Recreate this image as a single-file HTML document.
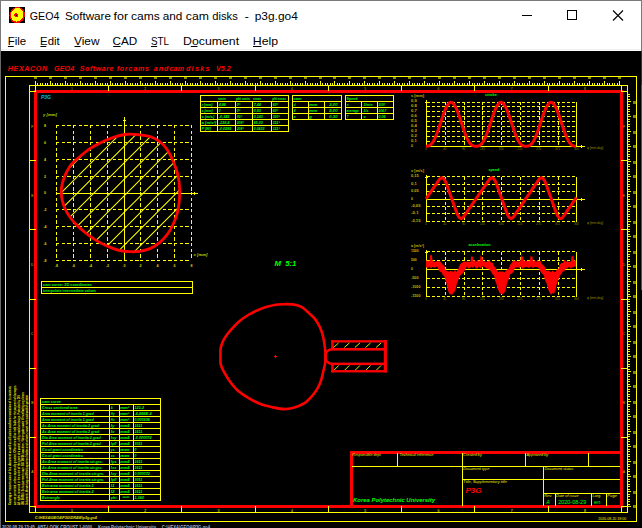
<!DOCTYPE html>
<html><head><meta charset="utf-8"><style>
html,body{margin:0;padding:0;width:642px;height:528px;overflow:hidden;background:#fff;}
body{position:relative;font-family:"Liberation Sans",sans-serif;}
.t{position:absolute;white-space:nowrap;color:#000;font-size:12px;line-height:14px;}
.u{text-decoration:underline;text-underline-offset:1px;}
svg text{font-family:"Liberation Sans",sans-serif;}
</style></head><body>
<div style="position:absolute;left:0;top:0;width:640px;height:527px;border:1px solid #7a7a7a;border-bottom:none"></div>
<svg style="position:absolute;left:9px;top:7px" width="16" height="16" shape-rendering="crispEdges"><rect width="16" height="16" fill="#000"/><ellipse cx="8.2" cy="8.2" rx="7.6" ry="8.2" transform="rotate(25 8.2 8.2)" fill="#f00"/><ellipse cx="8" cy="7.8" rx="6.2" ry="6.9" transform="rotate(25 8 7.8)" fill="#ff0"/><circle cx="7.3" cy="8.3" r="2.1" fill="#f00"/><rect x="7" y="8" width="1.2" height="1.2" fill="#000"/></svg>
<svg style="position:absolute;left:0;top:0" width="642" height="51"><text x="29.799999999999997" y="19.7" font-size="11.8" fill="#000" textLength="29.6" lengthAdjust="spacingAndGlyphs">GEO4</text><text x="64.9" y="19.7" font-size="11.8" fill="#000" textLength="46.1" lengthAdjust="spacingAndGlyphs">Software</text><text x="113.60000000000001" y="19.7" font-size="11.8" fill="#000" textLength="14.6" lengthAdjust="spacingAndGlyphs">for</text><text x="131.1" y="19.7" font-size="11.8" fill="#000" textLength="28.8" lengthAdjust="spacingAndGlyphs">cams</text><text x="162.8" y="19.7" font-size="11.8" fill="#000" textLength="19.6" lengthAdjust="spacingAndGlyphs">and</text><text x="185.8" y="19.7" font-size="11.8" fill="#000" textLength="23.1" lengthAdjust="spacingAndGlyphs">cam</text><text x="212.3" y="19.7" font-size="11.8" fill="#000" textLength="25.5" lengthAdjust="spacingAndGlyphs">disks</text><text x="244.6" y="19.7" font-size="11.8" fill="#000" textLength="4.4" lengthAdjust="spacingAndGlyphs">-</text><text x="254.70000000000002" y="19.7" font-size="11.8" fill="#000" textLength="43.1" lengthAdjust="spacingAndGlyphs">p3g.go4</text><text x="7.699999999999999" y="44.6" font-size="11.8" fill="#000" textLength="18.5" lengthAdjust="spacingAndGlyphs">File</text><text x="40.1" y="44.6" font-size="11.8" fill="#000" textLength="19.5" lengthAdjust="spacingAndGlyphs">Edit</text><text x="74.0" y="44.6" font-size="11.8" fill="#000" textLength="25.5" lengthAdjust="spacingAndGlyphs">View</text><text x="112.6" y="44.6" font-size="11.8" fill="#000" textLength="24.7" lengthAdjust="spacingAndGlyphs">CAD</text><text x="150.9" y="44.6" font-size="11.8" fill="#000" textLength="18.1" lengthAdjust="spacingAndGlyphs">STL</text><text x="183.0" y="44.6" font-size="11.8" fill="#000" textLength="56.1" lengthAdjust="spacingAndGlyphs">Document</text><text x="252.8" y="44.6" font-size="11.8" fill="#000" textLength="25.3" lengthAdjust="spacingAndGlyphs">Help</text><rect x="7.9" y="46" width="5.8" height="1" fill="#000"/><rect x="40.4" y="46" width="5.9" height="1" fill="#000"/><rect x="74.5" y="46" width="6.0" height="1" fill="#000"/><rect x="113.2" y="46" width="7.4" height="1" fill="#000"/><rect x="151" y="46" width="6.1" height="1" fill="#000"/><rect x="190.8" y="46" width="6.7" height="1" fill="#000"/><rect x="253" y="46" width="8.5" height="1" fill="#000"/></svg>
<svg style="position:absolute;left:0;top:0" width="642" height="30">
<line x1="522" y1="15.5" x2="532" y2="15.5" stroke="#000" stroke-width="1"/>
<rect x="567.5" y="10.5" width="9" height="9" fill="none" stroke="#000" stroke-width="1"/>
<path d="M613,10.5 L623,20.5 M623,10.5 L613,20.5" stroke="#000" stroke-width="1.1"/>
</svg>
<svg style="position:absolute;left:0;top:0" width="642" height="528" shape-rendering="crispEdges">
<rect x="1" y="51" width="641" height="477" fill="#000"/><rect x="641" y="51" width="1" height="34" fill="#303438"/><rect x="641" y="85" width="1" height="205" fill="#555"/><rect x="0" y="51" width="1" height="477" fill="#6a6a6a"/><rect x="1" y="49" width="640" height="1" fill="#f0f0f0"/><text x="7.8" y="71" font-size="7" fill="#ff0000" font-style="italic" font-weight="bold" textLength="39.2" lengthAdjust="spacing">HEXACON</text><text x="54" y="71" font-size="7" fill="#ff0000" font-style="italic" font-weight="bold" textLength="20.2" lengthAdjust="spacing">GEO4</text><text x="79.8" y="71" font-size="7" fill="#ff0000" font-style="italic" font-weight="bold" textLength="33.6" lengthAdjust="spacing">Software</text><text x="116.8" y="71" font-size="7" fill="#ff0000" font-style="italic" font-weight="bold" textLength="10.7" lengthAdjust="spacing">for</text><text x="128.5" y="71" font-size="7" fill="#ff0000" font-style="italic" font-weight="bold" textLength="20.5" lengthAdjust="spacing">cams</text><text x="153.8" y="71" font-size="7" fill="#ff0000" font-style="italic" font-weight="bold" textLength="14.6" lengthAdjust="spacing">and</text><text x="169.4" y="71" font-size="7" fill="#ff0000" font-style="italic" font-weight="bold" textLength="14.6" lengthAdjust="spacing">cam</text><text x="186" y="71" font-size="7" fill="#ff0000" font-style="italic" font-weight="bold" textLength="23.3" lengthAdjust="spacing">disks</text><text x="216" y="71" font-size="7" fill="#ff0000" font-style="italic" font-weight="bold" textLength="14.7" lengthAdjust="spacing">V5.2</text><rect x="5.5" y="76.5" width="631" height="445" stroke="#ffff00" stroke-width="1" fill="none" /><line x1="29" y1="85.5" x2="627.5" y2="85.5" stroke="#ffff00" stroke-width="1" /><line x1="29" y1="512.5" x2="627.5" y2="512.5" stroke="#ffff00" stroke-width="1" /><line x1="29.5" y1="85" x2="29.5" y2="513" stroke="#ffff00" stroke-width="1" /><line x1="627.5" y1="85" x2="627.5" y2="513" stroke="#ffff00" stroke-width="1" /><rect x="35.5" y="91.5" width="586" height="415" stroke="#ff0000" stroke-width="3" fill="none" /><rect x="29.5" y="85.5" width="6" height="6" stroke="#ffff00" stroke-width="1" fill="none" /><rect x="621.5" y="85.5" width="6" height="6" stroke="#ffff00" stroke-width="1" fill="none" /><rect x="29.5" y="506.5" width="6" height="6" stroke="#ffff00" stroke-width="1" fill="none" /><rect x="621.5" y="506.5" width="6" height="6" stroke="#ffff00" stroke-width="1" fill="none" /><line x1="35.5" y1="81" x2="35.5" y2="85.5" stroke="#ffff00" stroke-width="1" /><rect x="34" y="77" width="3" height="2" fill="#8a8a00"/><line x1="37.5" y1="82.5" x2="37.5" y2="85.5" stroke="#ffff00" stroke-width="1" /><line x1="40.5" y1="82.5" x2="40.5" y2="85.5" stroke="#ffff00" stroke-width="1" /><line x1="42.5" y1="82.5" x2="42.5" y2="85.5" stroke="#ffff00" stroke-width="1" /><line x1="45.5" y1="82.5" x2="45.5" y2="85.5" stroke="#ffff00" stroke-width="1" /><line x1="47.5" y1="82.5" x2="47.5" y2="85.5" stroke="#ffff00" stroke-width="1" /><line x1="50.5" y1="81" x2="50.5" y2="85.5" stroke="#ffff00" stroke-width="1" /><rect x="49" y="77" width="3" height="2" fill="#8a8a00"/><line x1="52.5" y1="82.5" x2="52.5" y2="85.5" stroke="#ffff00" stroke-width="1" /><line x1="55.5" y1="82.5" x2="55.5" y2="85.5" stroke="#ffff00" stroke-width="1" /><line x1="57.5" y1="82.5" x2="57.5" y2="85.5" stroke="#ffff00" stroke-width="1" /><line x1="60.5" y1="82.5" x2="60.5" y2="85.5" stroke="#ffff00" stroke-width="1" /><line x1="62.5" y1="82.5" x2="62.5" y2="85.5" stroke="#ffff00" stroke-width="1" /><line x1="65.5" y1="81" x2="65.5" y2="85.5" stroke="#ffff00" stroke-width="1" /><rect x="64" y="77" width="3" height="2" fill="#8a8a00"/><line x1="67.5" y1="82.5" x2="67.5" y2="85.5" stroke="#ffff00" stroke-width="1" /><line x1="70.5" y1="82.5" x2="70.5" y2="85.5" stroke="#ffff00" stroke-width="1" /><line x1="72.5" y1="82.5" x2="72.5" y2="85.5" stroke="#ffff00" stroke-width="1" /><line x1="75.5" y1="82.5" x2="75.5" y2="85.5" stroke="#ffff00" stroke-width="1" /><line x1="77.5" y1="82.5" x2="77.5" y2="85.5" stroke="#ffff00" stroke-width="1" /><line x1="80.5" y1="81" x2="80.5" y2="85.5" stroke="#ffff00" stroke-width="1" /><rect x="79" y="77" width="3" height="2" fill="#8a8a00"/><line x1="82.5" y1="82.5" x2="82.5" y2="85.5" stroke="#ffff00" stroke-width="1" /><line x1="85.5" y1="82.5" x2="85.5" y2="85.5" stroke="#ffff00" stroke-width="1" /><line x1="87.5" y1="82.5" x2="87.5" y2="85.5" stroke="#ffff00" stroke-width="1" /><line x1="90.5" y1="82.5" x2="90.5" y2="85.5" stroke="#ffff00" stroke-width="1" /><line x1="92.5" y1="82.5" x2="92.5" y2="85.5" stroke="#ffff00" stroke-width="1" /><line x1="95.5" y1="81" x2="95.5" y2="85.5" stroke="#ffff00" stroke-width="1" /><rect x="94" y="77" width="3" height="2" fill="#8a8a00"/><line x1="97.5" y1="82.5" x2="97.5" y2="85.5" stroke="#ffff00" stroke-width="1" /><line x1="100.5" y1="82.5" x2="100.5" y2="85.5" stroke="#ffff00" stroke-width="1" /><line x1="102.5" y1="82.5" x2="102.5" y2="85.5" stroke="#ffff00" stroke-width="1" /><line x1="105.5" y1="82.5" x2="105.5" y2="85.5" stroke="#ffff00" stroke-width="1" /><line x1="107.5" y1="82.5" x2="107.5" y2="85.5" stroke="#ffff00" stroke-width="1" /><line x1="110.5" y1="81" x2="110.5" y2="85.5" stroke="#ffff00" stroke-width="1" /><rect x="109" y="77" width="3" height="2" fill="#8a8a00"/><line x1="112.5" y1="82.5" x2="112.5" y2="85.5" stroke="#ffff00" stroke-width="1" /><line x1="115.5" y1="82.5" x2="115.5" y2="85.5" stroke="#ffff00" stroke-width="1" /><line x1="117.5" y1="82.5" x2="117.5" y2="85.5" stroke="#ffff00" stroke-width="1" /><line x1="120.5" y1="82.5" x2="120.5" y2="85.5" stroke="#ffff00" stroke-width="1" /><line x1="122.5" y1="82.5" x2="122.5" y2="85.5" stroke="#ffff00" stroke-width="1" /><line x1="125.5" y1="81" x2="125.5" y2="85.5" stroke="#ffff00" stroke-width="1" /><rect x="124" y="77" width="3" height="2" fill="#8a8a00"/><line x1="127.5" y1="82.5" x2="127.5" y2="85.5" stroke="#ffff00" stroke-width="1" /><line x1="130.5" y1="82.5" x2="130.5" y2="85.5" stroke="#ffff00" stroke-width="1" /><line x1="132.5" y1="82.5" x2="132.5" y2="85.5" stroke="#ffff00" stroke-width="1" /><line x1="135.5" y1="82.5" x2="135.5" y2="85.5" stroke="#ffff00" stroke-width="1" /><line x1="137.5" y1="82.5" x2="137.5" y2="85.5" stroke="#ffff00" stroke-width="1" /><line x1="140.5" y1="81" x2="140.5" y2="85.5" stroke="#ffff00" stroke-width="1" /><rect x="139" y="77" width="3" height="2" fill="#8a8a00"/><line x1="142.5" y1="82.5" x2="142.5" y2="85.5" stroke="#ffff00" stroke-width="1" /><line x1="145.5" y1="82.5" x2="145.5" y2="85.5" stroke="#ffff00" stroke-width="1" /><line x1="147.5" y1="82.5" x2="147.5" y2="85.5" stroke="#ffff00" stroke-width="1" /><line x1="150.5" y1="82.5" x2="150.5" y2="85.5" stroke="#ffff00" stroke-width="1" /><line x1="152.5" y1="82.5" x2="152.5" y2="85.5" stroke="#ffff00" stroke-width="1" /><line x1="155.5" y1="81" x2="155.5" y2="85.5" stroke="#ffff00" stroke-width="1" /><rect x="154" y="77" width="3" height="2" fill="#8a8a00"/><line x1="157.5" y1="82.5" x2="157.5" y2="85.5" stroke="#ffff00" stroke-width="1" /><line x1="160.5" y1="82.5" x2="160.5" y2="85.5" stroke="#ffff00" stroke-width="1" /><line x1="162.5" y1="82.5" x2="162.5" y2="85.5" stroke="#ffff00" stroke-width="1" /><line x1="165.5" y1="82.5" x2="165.5" y2="85.5" stroke="#ffff00" stroke-width="1" /><line x1="167.5" y1="82.5" x2="167.5" y2="85.5" stroke="#ffff00" stroke-width="1" /><line x1="170.5" y1="81" x2="170.5" y2="85.5" stroke="#ffff00" stroke-width="1" /><rect x="169" y="77" width="3" height="2" fill="#8a8a00"/><line x1="172.5" y1="82.5" x2="172.5" y2="85.5" stroke="#ffff00" stroke-width="1" /><line x1="175.5" y1="82.5" x2="175.5" y2="85.5" stroke="#ffff00" stroke-width="1" /><line x1="177.5" y1="82.5" x2="177.5" y2="85.5" stroke="#ffff00" stroke-width="1" /><line x1="180.5" y1="82.5" x2="180.5" y2="85.5" stroke="#ffff00" stroke-width="1" /><line x1="182.5" y1="82.5" x2="182.5" y2="85.5" stroke="#ffff00" stroke-width="1" /><line x1="185.5" y1="81" x2="185.5" y2="85.5" stroke="#ffff00" stroke-width="1" /><rect x="184" y="77" width="3" height="2" fill="#8a8a00"/><line x1="187.5" y1="82.5" x2="187.5" y2="85.5" stroke="#ffff00" stroke-width="1" /><line x1="190.5" y1="82.5" x2="190.5" y2="85.5" stroke="#ffff00" stroke-width="1" /><line x1="192.5" y1="82.5" x2="192.5" y2="85.5" stroke="#ffff00" stroke-width="1" /><line x1="195.5" y1="82.5" x2="195.5" y2="85.5" stroke="#ffff00" stroke-width="1" /><line x1="197.5" y1="82.5" x2="197.5" y2="85.5" stroke="#ffff00" stroke-width="1" /><line x1="200.5" y1="81" x2="200.5" y2="85.5" stroke="#ffff00" stroke-width="1" /><rect x="199" y="77" width="3" height="2" fill="#8a8a00"/><line x1="202.5" y1="82.5" x2="202.5" y2="85.5" stroke="#ffff00" stroke-width="1" /><line x1="205.5" y1="82.5" x2="205.5" y2="85.5" stroke="#ffff00" stroke-width="1" /><line x1="207.5" y1="82.5" x2="207.5" y2="85.5" stroke="#ffff00" stroke-width="1" /><line x1="210.5" y1="82.5" x2="210.5" y2="85.5" stroke="#ffff00" stroke-width="1" /><line x1="212.5" y1="82.5" x2="212.5" y2="85.5" stroke="#ffff00" stroke-width="1" /><line x1="215.5" y1="81" x2="215.5" y2="85.5" stroke="#ffff00" stroke-width="1" /><rect x="214" y="77" width="3" height="2" fill="#8a8a00"/><line x1="217.5" y1="82.5" x2="217.5" y2="85.5" stroke="#ffff00" stroke-width="1" /><line x1="220.5" y1="82.5" x2="220.5" y2="85.5" stroke="#ffff00" stroke-width="1" /><line x1="222.5" y1="82.5" x2="222.5" y2="85.5" stroke="#ffff00" stroke-width="1" /><line x1="225.5" y1="82.5" x2="225.5" y2="85.5" stroke="#ffff00" stroke-width="1" /><line x1="227.5" y1="82.5" x2="227.5" y2="85.5" stroke="#ffff00" stroke-width="1" /><line x1="230.5" y1="81" x2="230.5" y2="85.5" stroke="#ffff00" stroke-width="1" /><rect x="229" y="77" width="3" height="2" fill="#8a8a00"/><line x1="232.5" y1="82.5" x2="232.5" y2="85.5" stroke="#ffff00" stroke-width="1" /><line x1="235.5" y1="82.5" x2="235.5" y2="85.5" stroke="#ffff00" stroke-width="1" /><line x1="237.5" y1="82.5" x2="237.5" y2="85.5" stroke="#ffff00" stroke-width="1" /><line x1="240.5" y1="82.5" x2="240.5" y2="85.5" stroke="#ffff00" stroke-width="1" /><line x1="242.5" y1="82.5" x2="242.5" y2="85.5" stroke="#ffff00" stroke-width="1" /><line x1="245.5" y1="81" x2="245.5" y2="85.5" stroke="#ffff00" stroke-width="1" /><rect x="244" y="77" width="3" height="2" fill="#8a8a00"/><line x1="247.5" y1="82.5" x2="247.5" y2="85.5" stroke="#ffff00" stroke-width="1" /><line x1="250.5" y1="82.5" x2="250.5" y2="85.5" stroke="#ffff00" stroke-width="1" /><line x1="252.5" y1="82.5" x2="252.5" y2="85.5" stroke="#ffff00" stroke-width="1" /><line x1="255.5" y1="82.5" x2="255.5" y2="85.5" stroke="#ffff00" stroke-width="1" /><line x1="257.5" y1="82.5" x2="257.5" y2="85.5" stroke="#ffff00" stroke-width="1" /><line x1="260.5" y1="81" x2="260.5" y2="85.5" stroke="#ffff00" stroke-width="1" /><rect x="259" y="77" width="3" height="2" fill="#8a8a00"/><line x1="262.5" y1="82.5" x2="262.5" y2="85.5" stroke="#ffff00" stroke-width="1" /><line x1="265.5" y1="82.5" x2="265.5" y2="85.5" stroke="#ffff00" stroke-width="1" /><line x1="267.5" y1="82.5" x2="267.5" y2="85.5" stroke="#ffff00" stroke-width="1" /><line x1="270.5" y1="82.5" x2="270.5" y2="85.5" stroke="#ffff00" stroke-width="1" /><line x1="272.5" y1="82.5" x2="272.5" y2="85.5" stroke="#ffff00" stroke-width="1" /><line x1="275.5" y1="81" x2="275.5" y2="85.5" stroke="#ffff00" stroke-width="1" /><rect x="274" y="77" width="3" height="2" fill="#8a8a00"/><line x1="277.5" y1="82.5" x2="277.5" y2="85.5" stroke="#ffff00" stroke-width="1" /><line x1="280.5" y1="82.5" x2="280.5" y2="85.5" stroke="#ffff00" stroke-width="1" /><line x1="282.5" y1="82.5" x2="282.5" y2="85.5" stroke="#ffff00" stroke-width="1" /><line x1="285.5" y1="82.5" x2="285.5" y2="85.5" stroke="#ffff00" stroke-width="1" /><line x1="287.5" y1="82.5" x2="287.5" y2="85.5" stroke="#ffff00" stroke-width="1" /><line x1="290.5" y1="81" x2="290.5" y2="85.5" stroke="#ffff00" stroke-width="1" /><rect x="289" y="77" width="3" height="2" fill="#8a8a00"/><line x1="292.5" y1="82.5" x2="292.5" y2="85.5" stroke="#ffff00" stroke-width="1" /><line x1="295.5" y1="82.5" x2="295.5" y2="85.5" stroke="#ffff00" stroke-width="1" /><line x1="297.5" y1="82.5" x2="297.5" y2="85.5" stroke="#ffff00" stroke-width="1" /><line x1="300.5" y1="82.5" x2="300.5" y2="85.5" stroke="#ffff00" stroke-width="1" /><line x1="302.5" y1="82.5" x2="302.5" y2="85.5" stroke="#ffff00" stroke-width="1" /><line x1="305.5" y1="81" x2="305.5" y2="85.5" stroke="#ffff00" stroke-width="1" /><rect x="304" y="77" width="3" height="2" fill="#8a8a00"/><line x1="307.5" y1="82.5" x2="307.5" y2="85.5" stroke="#ffff00" stroke-width="1" /><line x1="310.5" y1="82.5" x2="310.5" y2="85.5" stroke="#ffff00" stroke-width="1" /><line x1="312.5" y1="82.5" x2="312.5" y2="85.5" stroke="#ffff00" stroke-width="1" /><line x1="315.5" y1="82.5" x2="315.5" y2="85.5" stroke="#ffff00" stroke-width="1" /><line x1="317.5" y1="82.5" x2="317.5" y2="85.5" stroke="#ffff00" stroke-width="1" /><line x1="320.5" y1="81" x2="320.5" y2="85.5" stroke="#ffff00" stroke-width="1" /><rect x="319" y="77" width="3" height="2" fill="#8a8a00"/><line x1="322.5" y1="82.5" x2="322.5" y2="85.5" stroke="#ffff00" stroke-width="1" /><line x1="325.5" y1="82.5" x2="325.5" y2="85.5" stroke="#ffff00" stroke-width="1" /><line x1="327.5" y1="82.5" x2="327.5" y2="85.5" stroke="#ffff00" stroke-width="1" /><line x1="330.5" y1="82.5" x2="330.5" y2="85.5" stroke="#ffff00" stroke-width="1" /><line x1="332.5" y1="82.5" x2="332.5" y2="85.5" stroke="#ffff00" stroke-width="1" /><line x1="334.5" y1="81" x2="334.5" y2="85.5" stroke="#ffff00" stroke-width="1" /><rect x="333" y="77" width="3" height="2" fill="#8a8a00"/><line x1="337.5" y1="82.5" x2="337.5" y2="85.5" stroke="#ffff00" stroke-width="1" /><line x1="339.5" y1="82.5" x2="339.5" y2="85.5" stroke="#ffff00" stroke-width="1" /><line x1="342.5" y1="82.5" x2="342.5" y2="85.5" stroke="#ffff00" stroke-width="1" /><line x1="344.5" y1="82.5" x2="344.5" y2="85.5" stroke="#ffff00" stroke-width="1" /><line x1="347.5" y1="82.5" x2="347.5" y2="85.5" stroke="#ffff00" stroke-width="1" /><line x1="349.5" y1="81" x2="349.5" y2="85.5" stroke="#ffff00" stroke-width="1" /><rect x="348" y="77" width="3" height="2" fill="#8a8a00"/><line x1="352.5" y1="82.5" x2="352.5" y2="85.5" stroke="#ffff00" stroke-width="1" /><line x1="354.5" y1="82.5" x2="354.5" y2="85.5" stroke="#ffff00" stroke-width="1" /><line x1="357.5" y1="82.5" x2="357.5" y2="85.5" stroke="#ffff00" stroke-width="1" /><line x1="359.5" y1="82.5" x2="359.5" y2="85.5" stroke="#ffff00" stroke-width="1" /><line x1="362.5" y1="82.5" x2="362.5" y2="85.5" stroke="#ffff00" stroke-width="1" /><line x1="364.5" y1="81" x2="364.5" y2="85.5" stroke="#ffff00" stroke-width="1" /><rect x="363" y="77" width="3" height="2" fill="#8a8a00"/><line x1="367.5" y1="82.5" x2="367.5" y2="85.5" stroke="#ffff00" stroke-width="1" /><line x1="369.5" y1="82.5" x2="369.5" y2="85.5" stroke="#ffff00" stroke-width="1" /><line x1="372.5" y1="82.5" x2="372.5" y2="85.5" stroke="#ffff00" stroke-width="1" /><line x1="374.5" y1="82.5" x2="374.5" y2="85.5" stroke="#ffff00" stroke-width="1" /><line x1="377.5" y1="82.5" x2="377.5" y2="85.5" stroke="#ffff00" stroke-width="1" /><line x1="379.5" y1="81" x2="379.5" y2="85.5" stroke="#ffff00" stroke-width="1" /><rect x="378" y="77" width="3" height="2" fill="#8a8a00"/><line x1="382.5" y1="82.5" x2="382.5" y2="85.5" stroke="#ffff00" stroke-width="1" /><line x1="384.5" y1="82.5" x2="384.5" y2="85.5" stroke="#ffff00" stroke-width="1" /><line x1="387.5" y1="82.5" x2="387.5" y2="85.5" stroke="#ffff00" stroke-width="1" /><line x1="389.5" y1="82.5" x2="389.5" y2="85.5" stroke="#ffff00" stroke-width="1" /><line x1="392.5" y1="82.5" x2="392.5" y2="85.5" stroke="#ffff00" stroke-width="1" /><line x1="394.5" y1="81" x2="394.5" y2="85.5" stroke="#ffff00" stroke-width="1" /><rect x="393" y="77" width="3" height="2" fill="#8a8a00"/><line x1="397.5" y1="82.5" x2="397.5" y2="85.5" stroke="#ffff00" stroke-width="1" /><line x1="399.5" y1="82.5" x2="399.5" y2="85.5" stroke="#ffff00" stroke-width="1" /><line x1="402.5" y1="82.5" x2="402.5" y2="85.5" stroke="#ffff00" stroke-width="1" /><line x1="404.5" y1="82.5" x2="404.5" y2="85.5" stroke="#ffff00" stroke-width="1" /><line x1="407.5" y1="82.5" x2="407.5" y2="85.5" stroke="#ffff00" stroke-width="1" /><line x1="409.5" y1="81" x2="409.5" y2="85.5" stroke="#ffff00" stroke-width="1" /><rect x="408" y="77" width="3" height="2" fill="#8a8a00"/><line x1="412.5" y1="82.5" x2="412.5" y2="85.5" stroke="#ffff00" stroke-width="1" /><line x1="414.5" y1="82.5" x2="414.5" y2="85.5" stroke="#ffff00" stroke-width="1" /><line x1="417.5" y1="82.5" x2="417.5" y2="85.5" stroke="#ffff00" stroke-width="1" /><line x1="419.5" y1="82.5" x2="419.5" y2="85.5" stroke="#ffff00" stroke-width="1" /><line x1="422.5" y1="82.5" x2="422.5" y2="85.5" stroke="#ffff00" stroke-width="1" /><line x1="424.5" y1="81" x2="424.5" y2="85.5" stroke="#ffff00" stroke-width="1" /><rect x="423" y="77" width="3" height="2" fill="#8a8a00"/><line x1="427.5" y1="82.5" x2="427.5" y2="85.5" stroke="#ffff00" stroke-width="1" /><line x1="429.5" y1="82.5" x2="429.5" y2="85.5" stroke="#ffff00" stroke-width="1" /><line x1="432.5" y1="82.5" x2="432.5" y2="85.5" stroke="#ffff00" stroke-width="1" /><line x1="434.5" y1="82.5" x2="434.5" y2="85.5" stroke="#ffff00" stroke-width="1" /><line x1="437.5" y1="82.5" x2="437.5" y2="85.5" stroke="#ffff00" stroke-width="1" /><line x1="439.5" y1="81" x2="439.5" y2="85.5" stroke="#ffff00" stroke-width="1" /><rect x="438" y="77" width="3" height="2" fill="#8a8a00"/><line x1="442.5" y1="82.5" x2="442.5" y2="85.5" stroke="#ffff00" stroke-width="1" /><line x1="444.5" y1="82.5" x2="444.5" y2="85.5" stroke="#ffff00" stroke-width="1" /><line x1="447.5" y1="82.5" x2="447.5" y2="85.5" stroke="#ffff00" stroke-width="1" /><line x1="449.5" y1="82.5" x2="449.5" y2="85.5" stroke="#ffff00" stroke-width="1" /><line x1="452.5" y1="82.5" x2="452.5" y2="85.5" stroke="#ffff00" stroke-width="1" /><line x1="454.5" y1="81" x2="454.5" y2="85.5" stroke="#ffff00" stroke-width="1" /><rect x="453" y="77" width="3" height="2" fill="#8a8a00"/><line x1="457.5" y1="82.5" x2="457.5" y2="85.5" stroke="#ffff00" stroke-width="1" /><line x1="459.5" y1="82.5" x2="459.5" y2="85.5" stroke="#ffff00" stroke-width="1" /><line x1="462.5" y1="82.5" x2="462.5" y2="85.5" stroke="#ffff00" stroke-width="1" /><line x1="464.5" y1="82.5" x2="464.5" y2="85.5" stroke="#ffff00" stroke-width="1" /><line x1="467.5" y1="82.5" x2="467.5" y2="85.5" stroke="#ffff00" stroke-width="1" /><line x1="469.5" y1="81" x2="469.5" y2="85.5" stroke="#ffff00" stroke-width="1" /><rect x="468" y="77" width="3" height="2" fill="#8a8a00"/><line x1="472.5" y1="82.5" x2="472.5" y2="85.5" stroke="#ffff00" stroke-width="1" /><line x1="474.5" y1="82.5" x2="474.5" y2="85.5" stroke="#ffff00" stroke-width="1" /><line x1="477.5" y1="82.5" x2="477.5" y2="85.5" stroke="#ffff00" stroke-width="1" /><line x1="479.5" y1="82.5" x2="479.5" y2="85.5" stroke="#ffff00" stroke-width="1" /><line x1="482.5" y1="82.5" x2="482.5" y2="85.5" stroke="#ffff00" stroke-width="1" /><line x1="484.5" y1="81" x2="484.5" y2="85.5" stroke="#ffff00" stroke-width="1" /><rect x="483" y="77" width="3" height="2" fill="#8a8a00"/><line x1="487.5" y1="82.5" x2="487.5" y2="85.5" stroke="#ffff00" stroke-width="1" /><line x1="489.5" y1="82.5" x2="489.5" y2="85.5" stroke="#ffff00" stroke-width="1" /><line x1="492.5" y1="82.5" x2="492.5" y2="85.5" stroke="#ffff00" stroke-width="1" /><line x1="494.5" y1="82.5" x2="494.5" y2="85.5" stroke="#ffff00" stroke-width="1" /><line x1="497.5" y1="82.5" x2="497.5" y2="85.5" stroke="#ffff00" stroke-width="1" /><line x1="499.5" y1="81" x2="499.5" y2="85.5" stroke="#ffff00" stroke-width="1" /><rect x="498" y="77" width="3" height="2" fill="#8a8a00"/><line x1="502.5" y1="82.5" x2="502.5" y2="85.5" stroke="#ffff00" stroke-width="1" /><line x1="504.5" y1="82.5" x2="504.5" y2="85.5" stroke="#ffff00" stroke-width="1" /><line x1="507.5" y1="82.5" x2="507.5" y2="85.5" stroke="#ffff00" stroke-width="1" /><line x1="509.5" y1="82.5" x2="509.5" y2="85.5" stroke="#ffff00" stroke-width="1" /><line x1="512.5" y1="82.5" x2="512.5" y2="85.5" stroke="#ffff00" stroke-width="1" /><line x1="514.5" y1="81" x2="514.5" y2="85.5" stroke="#ffff00" stroke-width="1" /><rect x="513" y="77" width="3" height="2" fill="#8a8a00"/><line x1="517.5" y1="82.5" x2="517.5" y2="85.5" stroke="#ffff00" stroke-width="1" /><line x1="519.5" y1="82.5" x2="519.5" y2="85.5" stroke="#ffff00" stroke-width="1" /><line x1="522.5" y1="82.5" x2="522.5" y2="85.5" stroke="#ffff00" stroke-width="1" /><line x1="524.5" y1="82.5" x2="524.5" y2="85.5" stroke="#ffff00" stroke-width="1" /><line x1="527.5" y1="82.5" x2="527.5" y2="85.5" stroke="#ffff00" stroke-width="1" /><line x1="529.5" y1="81" x2="529.5" y2="85.5" stroke="#ffff00" stroke-width="1" /><rect x="528" y="77" width="3" height="2" fill="#8a8a00"/><line x1="532.5" y1="82.5" x2="532.5" y2="85.5" stroke="#ffff00" stroke-width="1" /><line x1="534.5" y1="82.5" x2="534.5" y2="85.5" stroke="#ffff00" stroke-width="1" /><line x1="537.5" y1="82.5" x2="537.5" y2="85.5" stroke="#ffff00" stroke-width="1" /><line x1="539.5" y1="82.5" x2="539.5" y2="85.5" stroke="#ffff00" stroke-width="1" /><line x1="542.5" y1="82.5" x2="542.5" y2="85.5" stroke="#ffff00" stroke-width="1" /><line x1="544.5" y1="81" x2="544.5" y2="85.5" stroke="#ffff00" stroke-width="1" /><rect x="543" y="77" width="3" height="2" fill="#8a8a00"/><line x1="547.5" y1="82.5" x2="547.5" y2="85.5" stroke="#ffff00" stroke-width="1" /><line x1="549.5" y1="82.5" x2="549.5" y2="85.5" stroke="#ffff00" stroke-width="1" /><line x1="552.5" y1="82.5" x2="552.5" y2="85.5" stroke="#ffff00" stroke-width="1" /><line x1="554.5" y1="82.5" x2="554.5" y2="85.5" stroke="#ffff00" stroke-width="1" /><line x1="557.5" y1="82.5" x2="557.5" y2="85.5" stroke="#ffff00" stroke-width="1" /><line x1="559.5" y1="81" x2="559.5" y2="85.5" stroke="#ffff00" stroke-width="1" /><rect x="558" y="77" width="3" height="2" fill="#8a8a00"/><line x1="562.5" y1="82.5" x2="562.5" y2="85.5" stroke="#ffff00" stroke-width="1" /><line x1="564.5" y1="82.5" x2="564.5" y2="85.5" stroke="#ffff00" stroke-width="1" /><line x1="567.5" y1="82.5" x2="567.5" y2="85.5" stroke="#ffff00" stroke-width="1" /><line x1="569.5" y1="82.5" x2="569.5" y2="85.5" stroke="#ffff00" stroke-width="1" /><line x1="572.5" y1="82.5" x2="572.5" y2="85.5" stroke="#ffff00" stroke-width="1" /><line x1="574.5" y1="81" x2="574.5" y2="85.5" stroke="#ffff00" stroke-width="1" /><rect x="573" y="77" width="3" height="2" fill="#8a8a00"/><line x1="577.5" y1="82.5" x2="577.5" y2="85.5" stroke="#ffff00" stroke-width="1" /><line x1="579.5" y1="82.5" x2="579.5" y2="85.5" stroke="#ffff00" stroke-width="1" /><line x1="582.5" y1="82.5" x2="582.5" y2="85.5" stroke="#ffff00" stroke-width="1" /><line x1="584.5" y1="82.5" x2="584.5" y2="85.5" stroke="#ffff00" stroke-width="1" /><line x1="587.5" y1="82.5" x2="587.5" y2="85.5" stroke="#ffff00" stroke-width="1" /><line x1="589.5" y1="81" x2="589.5" y2="85.5" stroke="#ffff00" stroke-width="1" /><rect x="588" y="77" width="3" height="2" fill="#8a8a00"/><line x1="592.5" y1="82.5" x2="592.5" y2="85.5" stroke="#ffff00" stroke-width="1" /><line x1="594.5" y1="82.5" x2="594.5" y2="85.5" stroke="#ffff00" stroke-width="1" /><line x1="597.5" y1="82.5" x2="597.5" y2="85.5" stroke="#ffff00" stroke-width="1" /><line x1="599.5" y1="82.5" x2="599.5" y2="85.5" stroke="#ffff00" stroke-width="1" /><line x1="602.5" y1="82.5" x2="602.5" y2="85.5" stroke="#ffff00" stroke-width="1" /><line x1="604.5" y1="81" x2="604.5" y2="85.5" stroke="#ffff00" stroke-width="1" /><rect x="603" y="77" width="3" height="2" fill="#8a8a00"/><line x1="607.5" y1="82.5" x2="607.5" y2="85.5" stroke="#ffff00" stroke-width="1" /><line x1="609.5" y1="82.5" x2="609.5" y2="85.5" stroke="#ffff00" stroke-width="1" /><line x1="612.5" y1="82.5" x2="612.5" y2="85.5" stroke="#ffff00" stroke-width="1" /><line x1="614.5" y1="82.5" x2="614.5" y2="85.5" stroke="#ffff00" stroke-width="1" /><line x1="617.5" y1="82.5" x2="617.5" y2="85.5" stroke="#ffff00" stroke-width="1" /><line x1="619.5" y1="81" x2="619.5" y2="85.5" stroke="#ffff00" stroke-width="1" /><rect x="618" y="77" width="3" height="2" fill="#8a8a00"/><line x1="108.5" y1="85.5" x2="108.5" y2="91" stroke="#ffff00" stroke-width="1" /><line x1="108.5" y1="506" x2="108.5" y2="512.5" stroke="#ffff00" stroke-width="1" /><line x1="181.5" y1="85.5" x2="181.5" y2="91" stroke="#ffff00" stroke-width="1" /><line x1="181.5" y1="506" x2="181.5" y2="512.5" stroke="#ffff00" stroke-width="1" /><line x1="255.5" y1="85.5" x2="255.5" y2="91" stroke="#ffff00" stroke-width="1" /><line x1="255.5" y1="506" x2="255.5" y2="512.5" stroke="#ffff00" stroke-width="1" /><line x1="328.5" y1="85.5" x2="328.5" y2="91" stroke="#ffff00" stroke-width="1" /><line x1="328.5" y1="506" x2="328.5" y2="512.5" stroke="#ffff00" stroke-width="1" /><line x1="401.5" y1="85.5" x2="401.5" y2="91" stroke="#ffff00" stroke-width="1" /><line x1="401.5" y1="506" x2="401.5" y2="512.5" stroke="#ffff00" stroke-width="1" /><line x1="474.5" y1="85.5" x2="474.5" y2="91" stroke="#ffff00" stroke-width="1" /><line x1="474.5" y1="506" x2="474.5" y2="512.5" stroke="#ffff00" stroke-width="1" /><line x1="548.5" y1="85.5" x2="548.5" y2="91" stroke="#ffff00" stroke-width="1" /><line x1="548.5" y1="506" x2="548.5" y2="512.5" stroke="#ffff00" stroke-width="1" /><text x="72.0375" y="90" font-size="3.5" fill="#a0c000" text-anchor="middle" font-style="normal" font-weight="normal" >1</text><text x="72.0375" y="511.5" font-size="3.5" fill="#ffff00" text-anchor="middle" font-style="normal" font-weight="normal" >1</text><text x="145.3125" y="90" font-size="3.5" fill="#a0c000" text-anchor="middle" font-style="normal" font-weight="normal" >2</text><text x="145.3125" y="511.5" font-size="3.5" fill="#ffff00" text-anchor="middle" font-style="normal" font-weight="normal" >2</text><text x="218.5875" y="90" font-size="3.5" fill="#a0c000" text-anchor="middle" font-style="normal" font-weight="normal" >3</text><text x="218.5875" y="511.5" font-size="3.5" fill="#ffff00" text-anchor="middle" font-style="normal" font-weight="normal" >3</text><text x="291.8625" y="90" font-size="3.5" fill="#a0c000" text-anchor="middle" font-style="normal" font-weight="normal" >4</text><text x="291.8625" y="511.5" font-size="3.5" fill="#ffff00" text-anchor="middle" font-style="normal" font-weight="normal" >4</text><text x="365.1375" y="90" font-size="3.5" fill="#a0c000" text-anchor="middle" font-style="normal" font-weight="normal" >5</text><text x="365.1375" y="511.5" font-size="3.5" fill="#ffff00" text-anchor="middle" font-style="normal" font-weight="normal" >5</text><text x="438.4125" y="90" font-size="3.5" fill="#a0c000" text-anchor="middle" font-style="normal" font-weight="normal" >6</text><text x="438.4125" y="511.5" font-size="3.5" fill="#ffff00" text-anchor="middle" font-style="normal" font-weight="normal" >6</text><text x="511.6875" y="90" font-size="3.5" fill="#a0c000" text-anchor="middle" font-style="normal" font-weight="normal" >7</text><text x="511.6875" y="511.5" font-size="3.5" fill="#ffff00" text-anchor="middle" font-style="normal" font-weight="normal" >7</text><text x="584.9625" y="90" font-size="3.5" fill="#a0c000" text-anchor="middle" font-style="normal" font-weight="normal" >8</text><text x="584.9625" y="511.5" font-size="3.5" fill="#ffff00" text-anchor="middle" font-style="normal" font-weight="normal" >8</text><line x1="29.5" y1="160.5" x2="36" y2="160.5" stroke="#ffff00" stroke-width="1" /><line x1="620.5" y1="160.5" x2="627.5" y2="160.5" stroke="#ffff00" stroke-width="1" /><line x1="29.5" y1="229.5" x2="36" y2="229.5" stroke="#ffff00" stroke-width="1" /><line x1="620.5" y1="229.5" x2="627.5" y2="229.5" stroke="#ffff00" stroke-width="1" /><line x1="29.5" y1="299.5" x2="36" y2="299.5" stroke="#ffff00" stroke-width="1" /><line x1="620.5" y1="299.5" x2="627.5" y2="299.5" stroke="#ffff00" stroke-width="1" /><line x1="29.5" y1="368.5" x2="36" y2="368.5" stroke="#ffff00" stroke-width="1" /><line x1="620.5" y1="368.5" x2="627.5" y2="368.5" stroke="#ffff00" stroke-width="1" /><line x1="29.5" y1="437.5" x2="36" y2="437.5" stroke="#ffff00" stroke-width="1" /><line x1="620.5" y1="437.5" x2="627.5" y2="437.5" stroke="#ffff00" stroke-width="1" /><text x="32.3" y="127.58333333333334" font-size="3.5" fill="#c0c000" text-anchor="middle" font-style="normal" font-weight="normal" >F</text><text x="624" y="127.58333333333334" font-size="3.5" fill="#c0c000" text-anchor="middle" font-style="normal" font-weight="normal" >F</text><text x="32.3" y="196.75" font-size="3.5" fill="#c0c000" text-anchor="middle" font-style="normal" font-weight="normal" >E</text><text x="624" y="196.75" font-size="3.5" fill="#c0c000" text-anchor="middle" font-style="normal" font-weight="normal" >E</text><text x="32.3" y="265.9166666666667" font-size="3.5" fill="#c0c000" text-anchor="middle" font-style="normal" font-weight="normal" >D</text><text x="624" y="265.9166666666667" font-size="3.5" fill="#c0c000" text-anchor="middle" font-style="normal" font-weight="normal" >D</text><text x="32.3" y="335.08333333333337" font-size="3.5" fill="#c0c000" text-anchor="middle" font-style="normal" font-weight="normal" >C</text><text x="624" y="335.08333333333337" font-size="3.5" fill="#c0c000" text-anchor="middle" font-style="normal" font-weight="normal" >C</text><text x="32.3" y="404.25" font-size="3.5" fill="#c0c000" text-anchor="middle" font-style="normal" font-weight="normal" >B</text><text x="624" y="404.25" font-size="3.5" fill="#c0c000" text-anchor="middle" font-style="normal" font-weight="normal" >B</text><text x="32.3" y="473.4166666666667" font-size="3.5" fill="#c0c000" text-anchor="middle" font-style="normal" font-weight="normal" >A</text><text x="624" y="473.4166666666667" font-size="3.5" fill="#c0c000" text-anchor="middle" font-style="normal" font-weight="normal" >A</text><line x1="627.5" y1="506.5" x2="631" y2="506.5" stroke="#ffff00" stroke-width="1" /><rect x="633" y="504.5" width="3" height="3" fill="#7a8a00"/><line x1="627.5" y1="504.5" x2="629.7" y2="504.5" stroke="#ffff00" stroke-width="1" /><line x1="627.5" y1="501.5" x2="629.7" y2="501.5" stroke="#ffff00" stroke-width="1" /><line x1="627.5" y1="499.5" x2="629.7" y2="499.5" stroke="#ffff00" stroke-width="1" /><line x1="627.5" y1="496.5" x2="629.7" y2="496.5" stroke="#ffff00" stroke-width="1" /><line x1="627.5" y1="494.5" x2="629.7" y2="494.5" stroke="#ffff00" stroke-width="1" /><line x1="627.5" y1="491.5" x2="631" y2="491.5" stroke="#ffff00" stroke-width="1" /><rect x="633" y="490.5" width="3" height="3" fill="#7a8a00"/><line x1="627.5" y1="489.5" x2="629.7" y2="489.5" stroke="#ffff00" stroke-width="1" /><line x1="627.5" y1="486.5" x2="629.7" y2="486.5" stroke="#ffff00" stroke-width="1" /><line x1="627.5" y1="484.5" x2="629.7" y2="484.5" stroke="#ffff00" stroke-width="1" /><line x1="627.5" y1="481.5" x2="629.7" y2="481.5" stroke="#ffff00" stroke-width="1" /><line x1="627.5" y1="479.5" x2="629.7" y2="479.5" stroke="#ffff00" stroke-width="1" /><line x1="627.5" y1="476.5" x2="631" y2="476.5" stroke="#ffff00" stroke-width="1" /><rect x="633" y="474.5" width="3" height="3" fill="#7a8a00"/><line x1="627.5" y1="474.5" x2="629.7" y2="474.5" stroke="#ffff00" stroke-width="1" /><line x1="627.5" y1="471.5" x2="629.7" y2="471.5" stroke="#ffff00" stroke-width="1" /><line x1="627.5" y1="469.5" x2="629.7" y2="469.5" stroke="#ffff00" stroke-width="1" /><line x1="627.5" y1="466.5" x2="629.7" y2="466.5" stroke="#ffff00" stroke-width="1" /><line x1="627.5" y1="464.5" x2="629.7" y2="464.5" stroke="#ffff00" stroke-width="1" /><line x1="627.5" y1="461.5" x2="631" y2="461.5" stroke="#ffff00" stroke-width="1" /><rect x="633" y="460.5" width="3" height="3" fill="#7a8a00"/><line x1="627.5" y1="459.5" x2="629.7" y2="459.5" stroke="#ffff00" stroke-width="1" /><line x1="627.5" y1="456.5" x2="629.7" y2="456.5" stroke="#ffff00" stroke-width="1" /><line x1="627.5" y1="454.5" x2="629.7" y2="454.5" stroke="#ffff00" stroke-width="1" /><line x1="627.5" y1="451.5" x2="629.7" y2="451.5" stroke="#ffff00" stroke-width="1" /><line x1="627.5" y1="449.5" x2="629.7" y2="449.5" stroke="#ffff00" stroke-width="1" /><line x1="627.5" y1="446.5" x2="631" y2="446.5" stroke="#ffff00" stroke-width="1" /><rect x="633" y="444.5" width="3" height="3" fill="#7a8a00"/><line x1="627.5" y1="444.5" x2="629.7" y2="444.5" stroke="#ffff00" stroke-width="1" /><line x1="627.5" y1="441.5" x2="629.7" y2="441.5" stroke="#ffff00" stroke-width="1" /><line x1="627.5" y1="439.5" x2="629.7" y2="439.5" stroke="#ffff00" stroke-width="1" /><line x1="627.5" y1="436.5" x2="629.7" y2="436.5" stroke="#ffff00" stroke-width="1" /><line x1="627.5" y1="434.5" x2="629.7" y2="434.5" stroke="#ffff00" stroke-width="1" /><line x1="627.5" y1="431.5" x2="631" y2="431.5" stroke="#ffff00" stroke-width="1" /><rect x="633" y="430.5" width="3" height="3" fill="#7a8a00"/><line x1="627.5" y1="429.5" x2="629.7" y2="429.5" stroke="#ffff00" stroke-width="1" /><line x1="627.5" y1="426.5" x2="629.7" y2="426.5" stroke="#ffff00" stroke-width="1" /><line x1="627.5" y1="424.5" x2="629.7" y2="424.5" stroke="#ffff00" stroke-width="1" /><line x1="627.5" y1="421.5" x2="629.7" y2="421.5" stroke="#ffff00" stroke-width="1" /><line x1="627.5" y1="419.5" x2="629.7" y2="419.5" stroke="#ffff00" stroke-width="1" /><line x1="627.5" y1="416.5" x2="631" y2="416.5" stroke="#ffff00" stroke-width="1" /><rect x="633" y="414.5" width="3" height="3" fill="#7a8a00"/><line x1="627.5" y1="414.5" x2="629.7" y2="414.5" stroke="#ffff00" stroke-width="1" /><line x1="627.5" y1="411.5" x2="629.7" y2="411.5" stroke="#ffff00" stroke-width="1" /><line x1="627.5" y1="409.5" x2="629.7" y2="409.5" stroke="#ffff00" stroke-width="1" /><line x1="627.5" y1="406.5" x2="629.7" y2="406.5" stroke="#ffff00" stroke-width="1" /><line x1="627.5" y1="404.5" x2="629.7" y2="404.5" stroke="#ffff00" stroke-width="1" /><line x1="627.5" y1="401.5" x2="631" y2="401.5" stroke="#ffff00" stroke-width="1" /><rect x="633" y="400.5" width="3" height="3" fill="#7a8a00"/><line x1="627.5" y1="399.5" x2="629.7" y2="399.5" stroke="#ffff00" stroke-width="1" /><line x1="627.5" y1="396.5" x2="629.7" y2="396.5" stroke="#ffff00" stroke-width="1" /><line x1="627.5" y1="394.5" x2="629.7" y2="394.5" stroke="#ffff00" stroke-width="1" /><line x1="627.5" y1="391.5" x2="629.7" y2="391.5" stroke="#ffff00" stroke-width="1" /><line x1="627.5" y1="389.5" x2="629.7" y2="389.5" stroke="#ffff00" stroke-width="1" /><line x1="627.5" y1="386.5" x2="631" y2="386.5" stroke="#ffff00" stroke-width="1" /><rect x="633" y="384.5" width="3" height="3" fill="#7a8a00"/><line x1="627.5" y1="384.5" x2="629.7" y2="384.5" stroke="#ffff00" stroke-width="1" /><line x1="627.5" y1="381.5" x2="629.7" y2="381.5" stroke="#ffff00" stroke-width="1" /><line x1="627.5" y1="379.5" x2="629.7" y2="379.5" stroke="#ffff00" stroke-width="1" /><line x1="627.5" y1="376.5" x2="629.7" y2="376.5" stroke="#ffff00" stroke-width="1" /><line x1="627.5" y1="374.5" x2="629.7" y2="374.5" stroke="#ffff00" stroke-width="1" /><line x1="627.5" y1="371.5" x2="631" y2="371.5" stroke="#ffff00" stroke-width="1" /><rect x="633" y="370.5" width="3" height="3" fill="#7a8a00"/><line x1="627.5" y1="369.5" x2="629.7" y2="369.5" stroke="#ffff00" stroke-width="1" /><line x1="627.5" y1="366.5" x2="629.7" y2="366.5" stroke="#ffff00" stroke-width="1" /><line x1="627.5" y1="364.5" x2="629.7" y2="364.5" stroke="#ffff00" stroke-width="1" /><line x1="627.5" y1="361.5" x2="629.7" y2="361.5" stroke="#ffff00" stroke-width="1" /><line x1="627.5" y1="359.5" x2="629.7" y2="359.5" stroke="#ffff00" stroke-width="1" /><line x1="627.5" y1="356.5" x2="631" y2="356.5" stroke="#ffff00" stroke-width="1" /><rect x="633" y="354.5" width="3" height="3" fill="#7a8a00"/><line x1="627.5" y1="354.5" x2="629.7" y2="354.5" stroke="#ffff00" stroke-width="1" /><line x1="627.5" y1="351.5" x2="629.7" y2="351.5" stroke="#ffff00" stroke-width="1" /><line x1="627.5" y1="349.5" x2="629.7" y2="349.5" stroke="#ffff00" stroke-width="1" /><line x1="627.5" y1="346.5" x2="629.7" y2="346.5" stroke="#ffff00" stroke-width="1" /><line x1="627.5" y1="344.5" x2="629.7" y2="344.5" stroke="#ffff00" stroke-width="1" /><line x1="627.5" y1="341.5" x2="631" y2="341.5" stroke="#ffff00" stroke-width="1" /><rect x="633" y="340.5" width="3" height="3" fill="#7a8a00"/><line x1="627.5" y1="339.5" x2="629.7" y2="339.5" stroke="#ffff00" stroke-width="1" /><line x1="627.5" y1="336.5" x2="629.7" y2="336.5" stroke="#ffff00" stroke-width="1" /><line x1="627.5" y1="334.5" x2="629.7" y2="334.5" stroke="#ffff00" stroke-width="1" /><line x1="627.5" y1="331.5" x2="629.7" y2="331.5" stroke="#ffff00" stroke-width="1" /><line x1="627.5" y1="329.5" x2="629.7" y2="329.5" stroke="#ffff00" stroke-width="1" /><line x1="627.5" y1="326.5" x2="631" y2="326.5" stroke="#ffff00" stroke-width="1" /><rect x="633" y="324.5" width="3" height="3" fill="#7a8a00"/><line x1="627.5" y1="324.5" x2="629.7" y2="324.5" stroke="#ffff00" stroke-width="1" /><line x1="627.5" y1="321.5" x2="629.7" y2="321.5" stroke="#ffff00" stroke-width="1" /><line x1="627.5" y1="319.5" x2="629.7" y2="319.5" stroke="#ffff00" stroke-width="1" /><line x1="627.5" y1="316.5" x2="629.7" y2="316.5" stroke="#ffff00" stroke-width="1" /><line x1="627.5" y1="314.5" x2="629.7" y2="314.5" stroke="#ffff00" stroke-width="1" /><line x1="627.5" y1="311.5" x2="631" y2="311.5" stroke="#ffff00" stroke-width="1" /><rect x="633" y="310.5" width="3" height="3" fill="#7a8a00"/><line x1="627.5" y1="309.5" x2="629.7" y2="309.5" stroke="#ffff00" stroke-width="1" /><line x1="627.5" y1="306.5" x2="629.7" y2="306.5" stroke="#ffff00" stroke-width="1" /><line x1="627.5" y1="304.5" x2="629.7" y2="304.5" stroke="#ffff00" stroke-width="1" /><line x1="627.5" y1="301.5" x2="629.7" y2="301.5" stroke="#ffff00" stroke-width="1" /><line x1="627.5" y1="299.5" x2="629.7" y2="299.5" stroke="#ffff00" stroke-width="1" /><line x1="627.5" y1="296.5" x2="631" y2="296.5" stroke="#ffff00" stroke-width="1" /><rect x="633" y="294.5" width="3" height="3" fill="#7a8a00"/><line x1="627.5" y1="294.5" x2="629.7" y2="294.5" stroke="#ffff00" stroke-width="1" /><line x1="627.5" y1="291.5" x2="629.7" y2="291.5" stroke="#ffff00" stroke-width="1" /><line x1="627.5" y1="289.5" x2="629.7" y2="289.5" stroke="#ffff00" stroke-width="1" /><line x1="627.5" y1="286.5" x2="629.7" y2="286.5" stroke="#ffff00" stroke-width="1" /><line x1="627.5" y1="284.5" x2="629.7" y2="284.5" stroke="#ffff00" stroke-width="1" /><line x1="627.5" y1="281.5" x2="631" y2="281.5" stroke="#ffff00" stroke-width="1" /><rect x="633" y="280.5" width="3" height="3" fill="#7a8a00"/><line x1="627.5" y1="279.5" x2="629.7" y2="279.5" stroke="#ffff00" stroke-width="1" /><line x1="627.5" y1="276.5" x2="629.7" y2="276.5" stroke="#ffff00" stroke-width="1" /><line x1="627.5" y1="274.5" x2="629.7" y2="274.5" stroke="#ffff00" stroke-width="1" /><line x1="627.5" y1="271.5" x2="629.7" y2="271.5" stroke="#ffff00" stroke-width="1" /><line x1="627.5" y1="269.5" x2="629.7" y2="269.5" stroke="#ffff00" stroke-width="1" /><line x1="627.5" y1="266.5" x2="631" y2="266.5" stroke="#ffff00" stroke-width="1" /><rect x="633" y="264.5" width="3" height="3" fill="#7a8a00"/><line x1="627.5" y1="264.5" x2="629.7" y2="264.5" stroke="#ffff00" stroke-width="1" /><line x1="627.5" y1="261.5" x2="629.7" y2="261.5" stroke="#ffff00" stroke-width="1" /><line x1="627.5" y1="259.5" x2="629.7" y2="259.5" stroke="#ffff00" stroke-width="1" /><line x1="627.5" y1="256.5" x2="629.7" y2="256.5" stroke="#ffff00" stroke-width="1" /><line x1="627.5" y1="254.5" x2="629.7" y2="254.5" stroke="#ffff00" stroke-width="1" /><line x1="627.5" y1="251.5" x2="631" y2="251.5" stroke="#ffff00" stroke-width="1" /><rect x="633" y="250.5" width="3" height="3" fill="#7a8a00"/><line x1="627.5" y1="249.5" x2="629.7" y2="249.5" stroke="#ffff00" stroke-width="1" /><line x1="627.5" y1="246.5" x2="629.7" y2="246.5" stroke="#ffff00" stroke-width="1" /><line x1="627.5" y1="244.5" x2="629.7" y2="244.5" stroke="#ffff00" stroke-width="1" /><line x1="627.5" y1="241.5" x2="629.7" y2="241.5" stroke="#ffff00" stroke-width="1" /><line x1="627.5" y1="239.5" x2="629.7" y2="239.5" stroke="#ffff00" stroke-width="1" /><line x1="627.5" y1="236.5" x2="631" y2="236.5" stroke="#ffff00" stroke-width="1" /><rect x="633" y="234.5" width="3" height="3" fill="#7a8a00"/><line x1="627.5" y1="234.5" x2="629.7" y2="234.5" stroke="#ffff00" stroke-width="1" /><line x1="627.5" y1="231.5" x2="629.7" y2="231.5" stroke="#ffff00" stroke-width="1" /><line x1="627.5" y1="229.5" x2="629.7" y2="229.5" stroke="#ffff00" stroke-width="1" /><line x1="627.5" y1="226.5" x2="629.7" y2="226.5" stroke="#ffff00" stroke-width="1" /><line x1="627.5" y1="224.5" x2="629.7" y2="224.5" stroke="#ffff00" stroke-width="1" /><line x1="627.5" y1="221.5" x2="631" y2="221.5" stroke="#ffff00" stroke-width="1" /><rect x="633" y="220.5" width="3" height="3" fill="#7a8a00"/><line x1="627.5" y1="219.5" x2="629.7" y2="219.5" stroke="#ffff00" stroke-width="1" /><line x1="627.5" y1="216.5" x2="629.7" y2="216.5" stroke="#ffff00" stroke-width="1" /><line x1="627.5" y1="214.5" x2="629.7" y2="214.5" stroke="#ffff00" stroke-width="1" /><line x1="627.5" y1="211.5" x2="629.7" y2="211.5" stroke="#ffff00" stroke-width="1" /><line x1="627.5" y1="209.5" x2="629.7" y2="209.5" stroke="#ffff00" stroke-width="1" /><line x1="627.5" y1="206.5" x2="631" y2="206.5" stroke="#ffff00" stroke-width="1" /><rect x="633" y="204.5" width="3" height="3" fill="#7a8a00"/><line x1="627.5" y1="204.5" x2="629.7" y2="204.5" stroke="#ffff00" stroke-width="1" /><line x1="627.5" y1="201.5" x2="629.7" y2="201.5" stroke="#ffff00" stroke-width="1" /><line x1="627.5" y1="199.5" x2="629.7" y2="199.5" stroke="#ffff00" stroke-width="1" /><line x1="627.5" y1="196.5" x2="629.7" y2="196.5" stroke="#ffff00" stroke-width="1" /><line x1="627.5" y1="194.5" x2="629.7" y2="194.5" stroke="#ffff00" stroke-width="1" /><line x1="627.5" y1="191.5" x2="631" y2="191.5" stroke="#ffff00" stroke-width="1" /><rect x="633" y="190.5" width="3" height="3" fill="#7a8a00"/><line x1="627.5" y1="189.5" x2="629.7" y2="189.5" stroke="#ffff00" stroke-width="1" /><line x1="627.5" y1="186.5" x2="629.7" y2="186.5" stroke="#ffff00" stroke-width="1" /><line x1="627.5" y1="184.5" x2="629.7" y2="184.5" stroke="#ffff00" stroke-width="1" /><line x1="627.5" y1="181.5" x2="629.7" y2="181.5" stroke="#ffff00" stroke-width="1" /><line x1="627.5" y1="179.5" x2="629.7" y2="179.5" stroke="#ffff00" stroke-width="1" /><line x1="627.5" y1="176.5" x2="631" y2="176.5" stroke="#ffff00" stroke-width="1" /><rect x="633" y="174.5" width="3" height="3" fill="#7a8a00"/><line x1="627.5" y1="174.5" x2="629.7" y2="174.5" stroke="#ffff00" stroke-width="1" /><line x1="627.5" y1="171.5" x2="629.7" y2="171.5" stroke="#ffff00" stroke-width="1" /><line x1="627.5" y1="169.5" x2="629.7" y2="169.5" stroke="#ffff00" stroke-width="1" /><line x1="627.5" y1="166.5" x2="629.7" y2="166.5" stroke="#ffff00" stroke-width="1" /><line x1="627.5" y1="164.5" x2="629.7" y2="164.5" stroke="#ffff00" stroke-width="1" /><line x1="627.5" y1="161.5" x2="631" y2="161.5" stroke="#ffff00" stroke-width="1" /><rect x="633" y="160.5" width="3" height="3" fill="#7a8a00"/><line x1="627.5" y1="159.5" x2="629.7" y2="159.5" stroke="#ffff00" stroke-width="1" /><line x1="627.5" y1="156.5" x2="629.7" y2="156.5" stroke="#ffff00" stroke-width="1" /><line x1="627.5" y1="154.5" x2="629.7" y2="154.5" stroke="#ffff00" stroke-width="1" /><line x1="627.5" y1="151.5" x2="629.7" y2="151.5" stroke="#ffff00" stroke-width="1" /><line x1="627.5" y1="149.5" x2="629.7" y2="149.5" stroke="#ffff00" stroke-width="1" /><line x1="627.5" y1="146.5" x2="631" y2="146.5" stroke="#ffff00" stroke-width="1" /><rect x="633" y="144.5" width="3" height="3" fill="#7a8a00"/><line x1="627.5" y1="144.5" x2="629.7" y2="144.5" stroke="#ffff00" stroke-width="1" /><line x1="627.5" y1="141.5" x2="629.7" y2="141.5" stroke="#ffff00" stroke-width="1" /><line x1="627.5" y1="139.5" x2="629.7" y2="139.5" stroke="#ffff00" stroke-width="1" /><line x1="627.5" y1="136.5" x2="629.7" y2="136.5" stroke="#ffff00" stroke-width="1" /><line x1="627.5" y1="134.5" x2="629.7" y2="134.5" stroke="#ffff00" stroke-width="1" /><line x1="627.5" y1="131.5" x2="631" y2="131.5" stroke="#ffff00" stroke-width="1" /><rect x="633" y="130.5" width="3" height="3" fill="#7a8a00"/><line x1="627.5" y1="129.5" x2="629.7" y2="129.5" stroke="#ffff00" stroke-width="1" /><line x1="627.5" y1="126.5" x2="629.7" y2="126.5" stroke="#ffff00" stroke-width="1" /><line x1="627.5" y1="124.5" x2="629.7" y2="124.5" stroke="#ffff00" stroke-width="1" /><line x1="627.5" y1="121.5" x2="629.7" y2="121.5" stroke="#ffff00" stroke-width="1" /><line x1="627.5" y1="119.5" x2="629.7" y2="119.5" stroke="#ffff00" stroke-width="1" /><line x1="627.5" y1="116.5" x2="631" y2="116.5" stroke="#ffff00" stroke-width="1" /><rect x="633" y="114.5" width="3" height="3" fill="#7a8a00"/><line x1="627.5" y1="114.5" x2="629.7" y2="114.5" stroke="#ffff00" stroke-width="1" /><line x1="627.5" y1="111.5" x2="629.7" y2="111.5" stroke="#ffff00" stroke-width="1" /><line x1="627.5" y1="109.5" x2="629.7" y2="109.5" stroke="#ffff00" stroke-width="1" /><line x1="627.5" y1="106.5" x2="629.7" y2="106.5" stroke="#ffff00" stroke-width="1" /><line x1="627.5" y1="104.5" x2="629.7" y2="104.5" stroke="#ffff00" stroke-width="1" /><line x1="627.5" y1="101.5" x2="631" y2="101.5" stroke="#ffff00" stroke-width="1" /><rect x="633" y="100.5" width="3" height="3" fill="#7a8a00"/><line x1="627.5" y1="99.5" x2="629.7" y2="99.5" stroke="#ffff00" stroke-width="1" /><line x1="627.5" y1="96.5" x2="629.7" y2="96.5" stroke="#ffff00" stroke-width="1" /><line x1="627.5" y1="94.5" x2="629.7" y2="94.5" stroke="#ffff00" stroke-width="1" /><line x1="56.5" y1="125.0" x2="56.5" y2="142.0" stroke="#ffff00" stroke-width="1" stroke-dasharray="3.3,2.37"/><line x1="56.0" y1="125.5" x2="73.0" y2="125.5" stroke="#ffff00" stroke-width="1" stroke-dasharray="3.3,2.37"/><line x1="56.5" y1="142.0" x2="56.5" y2="159.0" stroke="#ffff00" stroke-width="1" stroke-dasharray="3.3,2.37"/><line x1="73.0" y1="125.5" x2="90.0" y2="125.5" stroke="#ffff00" stroke-width="1" stroke-dasharray="3.3,2.37"/><line x1="56.5" y1="159.0" x2="56.5" y2="176.0" stroke="#ffff00" stroke-width="1" stroke-dasharray="3.3,2.37"/><line x1="90.0" y1="125.5" x2="107.0" y2="125.5" stroke="#ffff00" stroke-width="1" stroke-dasharray="3.3,2.37"/><line x1="56.5" y1="176.0" x2="56.5" y2="192.0" stroke="#ffff00" stroke-width="1" stroke-dasharray="3.3,2.37"/><line x1="107.0" y1="125.5" x2="124.0" y2="125.5" stroke="#ffff00" stroke-width="1" stroke-dasharray="3.3,2.37"/><line x1="56.5" y1="192.0" x2="56.5" y2="209.0" stroke="#ffff00" stroke-width="1" stroke-dasharray="3.3,2.37"/><line x1="124.0" y1="125.5" x2="140.0" y2="125.5" stroke="#ffff00" stroke-width="1" stroke-dasharray="3.3,2.37"/><line x1="56.5" y1="209.0" x2="56.5" y2="226.0" stroke="#ffff00" stroke-width="1" stroke-dasharray="3.3,2.37"/><line x1="140.0" y1="125.5" x2="157.0" y2="125.5" stroke="#ffff00" stroke-width="1" stroke-dasharray="3.3,2.37"/><line x1="56.5" y1="226.0" x2="56.5" y2="243.0" stroke="#ffff00" stroke-width="1" stroke-dasharray="3.3,2.37"/><line x1="157.0" y1="125.5" x2="174.0" y2="125.5" stroke="#ffff00" stroke-width="1" stroke-dasharray="3.3,2.37"/><line x1="56.5" y1="243.0" x2="56.5" y2="260.0" stroke="#ffff00" stroke-width="1" stroke-dasharray="3.3,2.37"/><line x1="174.0" y1="125.5" x2="191.0" y2="125.5" stroke="#ffff00" stroke-width="1" stroke-dasharray="3.3,2.37"/><line x1="73.5" y1="125.0" x2="73.5" y2="142.0" stroke="#ffff00" stroke-width="1" stroke-dasharray="3.3,2.37"/><line x1="56.0" y1="142.5" x2="73.0" y2="142.5" stroke="#ffff00" stroke-width="1" stroke-dasharray="3.3,2.37"/><line x1="73.5" y1="142.0" x2="73.5" y2="159.0" stroke="#ffff00" stroke-width="1" stroke-dasharray="3.3,2.37"/><line x1="73.0" y1="142.5" x2="90.0" y2="142.5" stroke="#ffff00" stroke-width="1" stroke-dasharray="3.3,2.37"/><line x1="73.5" y1="159.0" x2="73.5" y2="176.0" stroke="#ffff00" stroke-width="1" stroke-dasharray="3.3,2.37"/><line x1="90.0" y1="142.5" x2="107.0" y2="142.5" stroke="#ffff00" stroke-width="1" stroke-dasharray="3.3,2.37"/><line x1="73.5" y1="176.0" x2="73.5" y2="192.0" stroke="#ffff00" stroke-width="1" stroke-dasharray="3.3,2.37"/><line x1="107.0" y1="142.5" x2="124.0" y2="142.5" stroke="#ffff00" stroke-width="1" stroke-dasharray="3.3,2.37"/><line x1="73.5" y1="192.0" x2="73.5" y2="209.0" stroke="#ffff00" stroke-width="1" stroke-dasharray="3.3,2.37"/><line x1="124.0" y1="142.5" x2="140.0" y2="142.5" stroke="#ffff00" stroke-width="1" stroke-dasharray="3.3,2.37"/><line x1="73.5" y1="209.0" x2="73.5" y2="226.0" stroke="#ffff00" stroke-width="1" stroke-dasharray="3.3,2.37"/><line x1="140.0" y1="142.5" x2="157.0" y2="142.5" stroke="#ffff00" stroke-width="1" stroke-dasharray="3.3,2.37"/><line x1="73.5" y1="226.0" x2="73.5" y2="243.0" stroke="#ffff00" stroke-width="1" stroke-dasharray="3.3,2.37"/><line x1="157.0" y1="142.5" x2="174.0" y2="142.5" stroke="#ffff00" stroke-width="1" stroke-dasharray="3.3,2.37"/><line x1="73.5" y1="243.0" x2="73.5" y2="260.0" stroke="#ffff00" stroke-width="1" stroke-dasharray="3.3,2.37"/><line x1="174.0" y1="142.5" x2="191.0" y2="142.5" stroke="#ffff00" stroke-width="1" stroke-dasharray="3.3,2.37"/><line x1="90.5" y1="125.0" x2="90.5" y2="142.0" stroke="#ffff00" stroke-width="1" stroke-dasharray="3.3,2.37"/><line x1="56.0" y1="159.5" x2="73.0" y2="159.5" stroke="#ffff00" stroke-width="1" stroke-dasharray="3.3,2.37"/><line x1="90.5" y1="142.0" x2="90.5" y2="159.0" stroke="#ffff00" stroke-width="1" stroke-dasharray="3.3,2.37"/><line x1="73.0" y1="159.5" x2="90.0" y2="159.5" stroke="#ffff00" stroke-width="1" stroke-dasharray="3.3,2.37"/><line x1="90.5" y1="159.0" x2="90.5" y2="176.0" stroke="#ffff00" stroke-width="1" stroke-dasharray="3.3,2.37"/><line x1="90.0" y1="159.5" x2="107.0" y2="159.5" stroke="#ffff00" stroke-width="1" stroke-dasharray="3.3,2.37"/><line x1="90.5" y1="176.0" x2="90.5" y2="192.0" stroke="#ffff00" stroke-width="1" stroke-dasharray="3.3,2.37"/><line x1="107.0" y1="159.5" x2="124.0" y2="159.5" stroke="#ffff00" stroke-width="1" stroke-dasharray="3.3,2.37"/><line x1="90.5" y1="192.0" x2="90.5" y2="209.0" stroke="#ffff00" stroke-width="1" stroke-dasharray="3.3,2.37"/><line x1="124.0" y1="159.5" x2="140.0" y2="159.5" stroke="#ffff00" stroke-width="1" stroke-dasharray="3.3,2.37"/><line x1="90.5" y1="209.0" x2="90.5" y2="226.0" stroke="#ffff00" stroke-width="1" stroke-dasharray="3.3,2.37"/><line x1="140.0" y1="159.5" x2="157.0" y2="159.5" stroke="#ffff00" stroke-width="1" stroke-dasharray="3.3,2.37"/><line x1="90.5" y1="226.0" x2="90.5" y2="243.0" stroke="#ffff00" stroke-width="1" stroke-dasharray="3.3,2.37"/><line x1="157.0" y1="159.5" x2="174.0" y2="159.5" stroke="#ffff00" stroke-width="1" stroke-dasharray="3.3,2.37"/><line x1="90.5" y1="243.0" x2="90.5" y2="260.0" stroke="#ffff00" stroke-width="1" stroke-dasharray="3.3,2.37"/><line x1="174.0" y1="159.5" x2="191.0" y2="159.5" stroke="#ffff00" stroke-width="1" stroke-dasharray="3.3,2.37"/><line x1="107.5" y1="125.0" x2="107.5" y2="142.0" stroke="#ffff00" stroke-width="1" stroke-dasharray="3.3,2.37"/><line x1="56.0" y1="176.5" x2="73.0" y2="176.5" stroke="#ffff00" stroke-width="1" stroke-dasharray="3.3,2.37"/><line x1="107.5" y1="142.0" x2="107.5" y2="159.0" stroke="#ffff00" stroke-width="1" stroke-dasharray="3.3,2.37"/><line x1="73.0" y1="176.5" x2="90.0" y2="176.5" stroke="#ffff00" stroke-width="1" stroke-dasharray="3.3,2.37"/><line x1="107.5" y1="159.0" x2="107.5" y2="176.0" stroke="#ffff00" stroke-width="1" stroke-dasharray="3.3,2.37"/><line x1="90.0" y1="176.5" x2="107.0" y2="176.5" stroke="#ffff00" stroke-width="1" stroke-dasharray="3.3,2.37"/><line x1="107.5" y1="176.0" x2="107.5" y2="192.0" stroke="#ffff00" stroke-width="1" stroke-dasharray="3.3,2.37"/><line x1="107.0" y1="176.5" x2="124.0" y2="176.5" stroke="#ffff00" stroke-width="1" stroke-dasharray="3.3,2.37"/><line x1="107.5" y1="192.0" x2="107.5" y2="209.0" stroke="#ffff00" stroke-width="1" stroke-dasharray="3.3,2.37"/><line x1="124.0" y1="176.5" x2="140.0" y2="176.5" stroke="#ffff00" stroke-width="1" stroke-dasharray="3.3,2.37"/><line x1="107.5" y1="209.0" x2="107.5" y2="226.0" stroke="#ffff00" stroke-width="1" stroke-dasharray="3.3,2.37"/><line x1="140.0" y1="176.5" x2="157.0" y2="176.5" stroke="#ffff00" stroke-width="1" stroke-dasharray="3.3,2.37"/><line x1="107.5" y1="226.0" x2="107.5" y2="243.0" stroke="#ffff00" stroke-width="1" stroke-dasharray="3.3,2.37"/><line x1="157.0" y1="176.5" x2="174.0" y2="176.5" stroke="#ffff00" stroke-width="1" stroke-dasharray="3.3,2.37"/><line x1="107.5" y1="243.0" x2="107.5" y2="260.0" stroke="#ffff00" stroke-width="1" stroke-dasharray="3.3,2.37"/><line x1="174.0" y1="176.5" x2="191.0" y2="176.5" stroke="#ffff00" stroke-width="1" stroke-dasharray="3.3,2.37"/><line x1="140.5" y1="125.0" x2="140.5" y2="142.0" stroke="#ffff00" stroke-width="1" stroke-dasharray="3.3,2.37"/><line x1="56.0" y1="209.5" x2="73.0" y2="209.5" stroke="#ffff00" stroke-width="1" stroke-dasharray="3.3,2.37"/><line x1="140.5" y1="142.0" x2="140.5" y2="159.0" stroke="#ffff00" stroke-width="1" stroke-dasharray="3.3,2.37"/><line x1="73.0" y1="209.5" x2="90.0" y2="209.5" stroke="#ffff00" stroke-width="1" stroke-dasharray="3.3,2.37"/><line x1="140.5" y1="159.0" x2="140.5" y2="176.0" stroke="#ffff00" stroke-width="1" stroke-dasharray="3.3,2.37"/><line x1="90.0" y1="209.5" x2="107.0" y2="209.5" stroke="#ffff00" stroke-width="1" stroke-dasharray="3.3,2.37"/><line x1="140.5" y1="176.0" x2="140.5" y2="192.0" stroke="#ffff00" stroke-width="1" stroke-dasharray="3.3,2.37"/><line x1="107.0" y1="209.5" x2="124.0" y2="209.5" stroke="#ffff00" stroke-width="1" stroke-dasharray="3.3,2.37"/><line x1="140.5" y1="192.0" x2="140.5" y2="209.0" stroke="#ffff00" stroke-width="1" stroke-dasharray="3.3,2.37"/><line x1="124.0" y1="209.5" x2="140.0" y2="209.5" stroke="#ffff00" stroke-width="1" stroke-dasharray="3.3,2.37"/><line x1="140.5" y1="209.0" x2="140.5" y2="226.0" stroke="#ffff00" stroke-width="1" stroke-dasharray="3.3,2.37"/><line x1="140.0" y1="209.5" x2="157.0" y2="209.5" stroke="#ffff00" stroke-width="1" stroke-dasharray="3.3,2.37"/><line x1="140.5" y1="226.0" x2="140.5" y2="243.0" stroke="#ffff00" stroke-width="1" stroke-dasharray="3.3,2.37"/><line x1="157.0" y1="209.5" x2="174.0" y2="209.5" stroke="#ffff00" stroke-width="1" stroke-dasharray="3.3,2.37"/><line x1="140.5" y1="243.0" x2="140.5" y2="260.0" stroke="#ffff00" stroke-width="1" stroke-dasharray="3.3,2.37"/><line x1="174.0" y1="209.5" x2="191.0" y2="209.5" stroke="#ffff00" stroke-width="1" stroke-dasharray="3.3,2.37"/><line x1="157.5" y1="125.0" x2="157.5" y2="142.0" stroke="#ffff00" stroke-width="1" stroke-dasharray="3.3,2.37"/><line x1="56.0" y1="226.5" x2="73.0" y2="226.5" stroke="#ffff00" stroke-width="1" stroke-dasharray="3.3,2.37"/><line x1="157.5" y1="142.0" x2="157.5" y2="159.0" stroke="#ffff00" stroke-width="1" stroke-dasharray="3.3,2.37"/><line x1="73.0" y1="226.5" x2="90.0" y2="226.5" stroke="#ffff00" stroke-width="1" stroke-dasharray="3.3,2.37"/><line x1="157.5" y1="159.0" x2="157.5" y2="176.0" stroke="#ffff00" stroke-width="1" stroke-dasharray="3.3,2.37"/><line x1="90.0" y1="226.5" x2="107.0" y2="226.5" stroke="#ffff00" stroke-width="1" stroke-dasharray="3.3,2.37"/><line x1="157.5" y1="176.0" x2="157.5" y2="192.0" stroke="#ffff00" stroke-width="1" stroke-dasharray="3.3,2.37"/><line x1="107.0" y1="226.5" x2="124.0" y2="226.5" stroke="#ffff00" stroke-width="1" stroke-dasharray="3.3,2.37"/><line x1="157.5" y1="192.0" x2="157.5" y2="209.0" stroke="#ffff00" stroke-width="1" stroke-dasharray="3.3,2.37"/><line x1="124.0" y1="226.5" x2="140.0" y2="226.5" stroke="#ffff00" stroke-width="1" stroke-dasharray="3.3,2.37"/><line x1="157.5" y1="209.0" x2="157.5" y2="226.0" stroke="#ffff00" stroke-width="1" stroke-dasharray="3.3,2.37"/><line x1="140.0" y1="226.5" x2="157.0" y2="226.5" stroke="#ffff00" stroke-width="1" stroke-dasharray="3.3,2.37"/><line x1="157.5" y1="226.0" x2="157.5" y2="243.0" stroke="#ffff00" stroke-width="1" stroke-dasharray="3.3,2.37"/><line x1="157.0" y1="226.5" x2="174.0" y2="226.5" stroke="#ffff00" stroke-width="1" stroke-dasharray="3.3,2.37"/><line x1="157.5" y1="243.0" x2="157.5" y2="260.0" stroke="#ffff00" stroke-width="1" stroke-dasharray="3.3,2.37"/><line x1="174.0" y1="226.5" x2="191.0" y2="226.5" stroke="#ffff00" stroke-width="1" stroke-dasharray="3.3,2.37"/><line x1="174.5" y1="125.0" x2="174.5" y2="142.0" stroke="#ffff00" stroke-width="1" stroke-dasharray="3.3,2.37"/><line x1="56.0" y1="243.5" x2="73.0" y2="243.5" stroke="#ffff00" stroke-width="1" stroke-dasharray="3.3,2.37"/><line x1="174.5" y1="142.0" x2="174.5" y2="159.0" stroke="#ffff00" stroke-width="1" stroke-dasharray="3.3,2.37"/><line x1="73.0" y1="243.5" x2="90.0" y2="243.5" stroke="#ffff00" stroke-width="1" stroke-dasharray="3.3,2.37"/><line x1="174.5" y1="159.0" x2="174.5" y2="176.0" stroke="#ffff00" stroke-width="1" stroke-dasharray="3.3,2.37"/><line x1="90.0" y1="243.5" x2="107.0" y2="243.5" stroke="#ffff00" stroke-width="1" stroke-dasharray="3.3,2.37"/><line x1="174.5" y1="176.0" x2="174.5" y2="192.0" stroke="#ffff00" stroke-width="1" stroke-dasharray="3.3,2.37"/><line x1="107.0" y1="243.5" x2="124.0" y2="243.5" stroke="#ffff00" stroke-width="1" stroke-dasharray="3.3,2.37"/><line x1="174.5" y1="192.0" x2="174.5" y2="209.0" stroke="#ffff00" stroke-width="1" stroke-dasharray="3.3,2.37"/><line x1="124.0" y1="243.5" x2="140.0" y2="243.5" stroke="#ffff00" stroke-width="1" stroke-dasharray="3.3,2.37"/><line x1="174.5" y1="209.0" x2="174.5" y2="226.0" stroke="#ffff00" stroke-width="1" stroke-dasharray="3.3,2.37"/><line x1="140.0" y1="243.5" x2="157.0" y2="243.5" stroke="#ffff00" stroke-width="1" stroke-dasharray="3.3,2.37"/><line x1="174.5" y1="226.0" x2="174.5" y2="243.0" stroke="#ffff00" stroke-width="1" stroke-dasharray="3.3,2.37"/><line x1="157.0" y1="243.5" x2="174.0" y2="243.5" stroke="#ffff00" stroke-width="1" stroke-dasharray="3.3,2.37"/><line x1="174.5" y1="243.0" x2="174.5" y2="260.0" stroke="#ffff00" stroke-width="1" stroke-dasharray="3.3,2.37"/><line x1="174.0" y1="243.5" x2="191.0" y2="243.5" stroke="#ffff00" stroke-width="1" stroke-dasharray="3.3,2.37"/><line x1="191.5" y1="125.0" x2="191.5" y2="142.0" stroke="#ffff00" stroke-width="1" stroke-dasharray="3.3,2.37"/><line x1="56.0" y1="260.5" x2="73.0" y2="260.5" stroke="#ffff00" stroke-width="1" stroke-dasharray="3.3,2.37"/><line x1="191.5" y1="142.0" x2="191.5" y2="159.0" stroke="#ffff00" stroke-width="1" stroke-dasharray="3.3,2.37"/><line x1="73.0" y1="260.5" x2="90.0" y2="260.5" stroke="#ffff00" stroke-width="1" stroke-dasharray="3.3,2.37"/><line x1="191.5" y1="159.0" x2="191.5" y2="176.0" stroke="#ffff00" stroke-width="1" stroke-dasharray="3.3,2.37"/><line x1="90.0" y1="260.5" x2="107.0" y2="260.5" stroke="#ffff00" stroke-width="1" stroke-dasharray="3.3,2.37"/><line x1="191.5" y1="176.0" x2="191.5" y2="192.0" stroke="#ffff00" stroke-width="1" stroke-dasharray="3.3,2.37"/><line x1="107.0" y1="260.5" x2="124.0" y2="260.5" stroke="#ffff00" stroke-width="1" stroke-dasharray="3.3,2.37"/><line x1="191.5" y1="192.0" x2="191.5" y2="209.0" stroke="#ffff00" stroke-width="1" stroke-dasharray="3.3,2.37"/><line x1="124.0" y1="260.5" x2="140.0" y2="260.5" stroke="#ffff00" stroke-width="1" stroke-dasharray="3.3,2.37"/><line x1="191.5" y1="209.0" x2="191.5" y2="226.0" stroke="#ffff00" stroke-width="1" stroke-dasharray="3.3,2.37"/><line x1="140.0" y1="260.5" x2="157.0" y2="260.5" stroke="#ffff00" stroke-width="1" stroke-dasharray="3.3,2.37"/><line x1="191.5" y1="226.0" x2="191.5" y2="243.0" stroke="#ffff00" stroke-width="1" stroke-dasharray="3.3,2.37"/><line x1="157.0" y1="260.5" x2="174.0" y2="260.5" stroke="#ffff00" stroke-width="1" stroke-dasharray="3.3,2.37"/><line x1="191.5" y1="243.0" x2="191.5" y2="260.0" stroke="#ffff00" stroke-width="1" stroke-dasharray="3.3,2.37"/><line x1="174.0" y1="260.5" x2="191.0" y2="260.5" stroke="#ffff00" stroke-width="1" stroke-dasharray="3.3,2.37"/><line x1="124.5" y1="118" x2="124.5" y2="260.5" stroke="#ffff00" stroke-width="1" /><line x1="56.0" y1="193.5" x2="197" y2="193.5" stroke="#ffff00" stroke-width="1" /><path d="M123.0,121 L124.5,117 L126.0,121Z" fill="#ffff00"/><path d="M194,192.0 L198,193.5 L194,195.0Z" fill="#ffff00"/><clipPath id="c1"><path d="M125.00,134.50 C129.55,133.88 133.72,134.22 138.00,134.60 C142.28,134.98 146.88,135.48 150.70,136.80 C154.52,138.12 158.07,140.22 160.90,142.50 C163.73,144.78 165.62,147.28 167.70,150.50 C169.78,153.72 171.68,157.63 173.40,161.80 C175.12,165.97 176.95,170.80 178.00,175.50 C179.05,180.20 179.53,185.37 179.70,190.00 C179.87,194.63 179.45,199.32 179.00,203.30 C178.55,207.28 178.00,210.37 177.00,213.90 C176.00,217.43 174.55,221.18 173.00,224.50 C171.45,227.82 169.90,230.82 167.70,233.80 C165.50,236.78 162.67,239.97 159.80,242.40 C156.93,244.83 153.82,246.92 150.50,248.40 C147.18,249.88 143.22,250.75 139.90,251.30 C136.58,251.85 133.92,251.80 130.60,251.70 C127.28,251.60 123.77,251.58 120.00,250.70 C116.23,249.82 111.77,248.00 108.00,246.40 C104.23,244.80 100.93,243.20 97.40,241.10 C93.87,239.00 90.00,236.23 86.80,233.80 C83.60,231.37 80.85,229.05 78.20,226.50 C75.55,223.95 73.00,221.27 70.90,218.50 C68.80,215.73 67.03,212.88 65.60,209.90 C64.17,206.92 63.03,203.58 62.30,200.60 C61.57,197.62 61.20,194.87 61.20,192.00 C61.20,189.13 61.57,186.38 62.30,183.40 C63.03,180.42 64.17,177.20 65.60,174.10 C67.03,171.00 68.68,167.57 70.90,164.80 C73.12,162.03 75.80,160.15 78.90,157.50 C82.00,154.85 85.97,151.33 89.50,148.90 C93.03,146.47 96.57,144.67 100.10,142.90 C103.63,141.13 106.55,139.70 110.70,138.30 C114.85,136.90 120.45,135.12 125.00,134.50Z"/></clipPath><path d="M-194.5,300 L5.5,100 M-178.0,300 L22.0,100 M-161.5,300 L38.5,100 M-145.0,300 L55.0,100 M-128.5,300 L71.5,100 M-112.0,300 L88.0,100 M-95.5,300 L104.5,100 M-79.0,300 L121.0,100 M-62.5,300 L137.5,100 M-46.0,300 L154.0,100 M-29.5,300 L170.5,100 M-13.0,300 L187.0,100 M3.5,300 L203.5,100 M20.0,300 L220.0,100 M36.5,300 L236.5,100 M53.0,300 L253.0,100 M69.5,300 L269.5,100 M86.0,300 L286.0,100 M102.5,300 L302.5,100 M119.0,300 L319.0,100 M135.5,300 L335.5,100 M152.0,300 L352.0,100 M168.5,300 L368.5,100 M185.0,300 L385.0,100 M201.5,300 L401.5,100" stroke="#ffff00" stroke-width="1.05" clip-path="url(#c1)" shape-rendering="auto"/><path d="M125.00,134.50 C129.55,133.88 133.72,134.22 138.00,134.60 C142.28,134.98 146.88,135.48 150.70,136.80 C154.52,138.12 158.07,140.22 160.90,142.50 C163.73,144.78 165.62,147.28 167.70,150.50 C169.78,153.72 171.68,157.63 173.40,161.80 C175.12,165.97 176.95,170.80 178.00,175.50 C179.05,180.20 179.53,185.37 179.70,190.00 C179.87,194.63 179.45,199.32 179.00,203.30 C178.55,207.28 178.00,210.37 177.00,213.90 C176.00,217.43 174.55,221.18 173.00,224.50 C171.45,227.82 169.90,230.82 167.70,233.80 C165.50,236.78 162.67,239.97 159.80,242.40 C156.93,244.83 153.82,246.92 150.50,248.40 C147.18,249.88 143.22,250.75 139.90,251.30 C136.58,251.85 133.92,251.80 130.60,251.70 C127.28,251.60 123.77,251.58 120.00,250.70 C116.23,249.82 111.77,248.00 108.00,246.40 C104.23,244.80 100.93,243.20 97.40,241.10 C93.87,239.00 90.00,236.23 86.80,233.80 C83.60,231.37 80.85,229.05 78.20,226.50 C75.55,223.95 73.00,221.27 70.90,218.50 C68.80,215.73 67.03,212.88 65.60,209.90 C64.17,206.92 63.03,203.58 62.30,200.60 C61.57,197.62 61.20,194.87 61.20,192.00 C61.20,189.13 61.57,186.38 62.30,183.40 C63.03,180.42 64.17,177.20 65.60,174.10 C67.03,171.00 68.68,167.57 70.90,164.80 C73.12,162.03 75.80,160.15 78.90,157.50 C82.00,154.85 85.97,151.33 89.50,148.90 C93.03,146.47 96.57,144.67 100.10,142.90 C103.63,141.13 106.55,139.70 110.70,138.30 C114.85,136.90 120.45,135.12 125.00,134.50Z" fill="none" stroke="#ff0000" stroke-width="2.8" shape-rendering="auto"/><text x="45" y="127.0" font-size="3.6" fill="#d8d800" text-anchor="middle" font-style="normal" font-weight="bold" >8</text><text x="56.5" y="267" font-size="3.6" fill="#d8d800" text-anchor="middle" font-style="normal" font-weight="bold" >-8</text><text x="45" y="144.0" font-size="3.6" fill="#d8d800" text-anchor="middle" font-style="normal" font-weight="bold" >6</text><text x="73.5" y="267" font-size="3.6" fill="#d8d800" text-anchor="middle" font-style="normal" font-weight="bold" >-6</text><text x="45" y="161.0" font-size="3.6" fill="#d8d800" text-anchor="middle" font-style="normal" font-weight="bold" >4</text><text x="90.5" y="267" font-size="3.6" fill="#d8d800" text-anchor="middle" font-style="normal" font-weight="bold" >-4</text><text x="45" y="178.0" font-size="3.6" fill="#d8d800" text-anchor="middle" font-style="normal" font-weight="bold" >2</text><text x="107.5" y="267" font-size="3.6" fill="#d8d800" text-anchor="middle" font-style="normal" font-weight="bold" >-2</text><text x="45" y="194.0" font-size="3.6" fill="#d8d800" text-anchor="middle" font-style="normal" font-weight="bold" >0</text><text x="124.5" y="267" font-size="3.6" fill="#d8d800" text-anchor="middle" font-style="normal" font-weight="bold" >0</text><text x="45" y="211.0" font-size="3.6" fill="#d8d800" text-anchor="middle" font-style="normal" font-weight="bold" >-2</text><text x="140.5" y="267" font-size="3.6" fill="#d8d800" text-anchor="middle" font-style="normal" font-weight="bold" >2</text><text x="45" y="228.0" font-size="3.6" fill="#d8d800" text-anchor="middle" font-style="normal" font-weight="bold" >-4</text><text x="157.5" y="267" font-size="3.6" fill="#d8d800" text-anchor="middle" font-style="normal" font-weight="bold" >4</text><text x="45" y="245.0" font-size="3.6" fill="#d8d800" text-anchor="middle" font-style="normal" font-weight="bold" >-6</text><text x="174.5" y="267" font-size="3.6" fill="#d8d800" text-anchor="middle" font-style="normal" font-weight="bold" >6</text><text x="45" y="262.0" font-size="3.6" fill="#d8d800" text-anchor="middle" font-style="normal" font-weight="bold" >-8</text><text x="191.5" y="267" font-size="3.6" fill="#d8d800" text-anchor="middle" font-style="normal" font-weight="bold" >8</text><text x="43" y="116" font-size="4.2" fill="#b8d000" text-anchor="start" font-style="italic" font-weight="bold" textLength="14" lengthAdjust="spacingAndGlyphs" >y [mm]</text><text x="193.5" y="256" font-size="4.2" fill="#b8d000" text-anchor="start" font-style="italic" font-weight="bold" textLength="14" lengthAdjust="spacingAndGlyphs" >x [mm]</text><text x="41" y="98.9" font-size="5.5" fill="#00b8e8" text-anchor="start" font-style="italic" font-weight="bold" textLength="10" lengthAdjust="spacingAndGlyphs" >P3G</text><rect x="200.5" y="95.5" width="88.0" height="36.0" stroke="#ffff00" stroke-width="1" fill="none" /><line x1="200.5" y1="101.5" x2="288.5" y2="101.5" stroke="#ffff00" stroke-width="1" /><line x1="200.5" y1="107.5" x2="288.5" y2="107.5" stroke="#ffff00" stroke-width="1" /><line x1="200.5" y1="113.5" x2="288.5" y2="113.5" stroke="#ffff00" stroke-width="1" /><line x1="200.5" y1="119.5" x2="288.5" y2="119.5" stroke="#ffff00" stroke-width="1" /><line x1="200.5" y1="125.5" x2="288.5" y2="125.5" stroke="#ffff00" stroke-width="1" /><line x1="217.5" y1="101.5" x2="217.5" y2="131.5" stroke="#ffff00" stroke-width="1" /><line x1="235.5" y1="101.5" x2="235.5" y2="131.5" stroke="#ffff00" stroke-width="1" /><line x1="252.5" y1="101.5" x2="252.5" y2="131.5" stroke="#ffff00" stroke-width="1" /><line x1="271.5" y1="101.5" x2="271.5" y2="131.5" stroke="#ffff00" stroke-width="1" /><text x="201.7" y="106.0" font-size="4.2" fill="#00ff00" text-anchor="start" font-style="italic" font-weight="bold" textLength="10.8" lengthAdjust="spacingAndGlyphs" >r [mm]</text><text x="218.7" y="106.0" font-size="4.2" fill="#00ff00" text-anchor="start" font-style="italic" font-weight="bold" textLength="7.2" lengthAdjust="spacingAndGlyphs" >4,86</text><text x="236.7" y="106.0" font-size="4.2" fill="#00ff00" text-anchor="start" font-style="italic" font-weight="bold" textLength="3.6" lengthAdjust="spacingAndGlyphs" >0°</text><text x="253.7" y="106.0" font-size="4.2" fill="#00ff00" text-anchor="start" font-style="italic" font-weight="bold" textLength="7.2" lengthAdjust="spacingAndGlyphs" >7,44</text><text x="272.7" y="106.0" font-size="4.2" fill="#00ff00" text-anchor="start" font-style="italic" font-weight="bold" textLength="5.4" lengthAdjust="spacingAndGlyphs" >60°</text><text x="201.7" y="112.0" font-size="4.2" fill="#00ff00" text-anchor="start" font-style="italic" font-weight="bold" textLength="10.8" lengthAdjust="spacingAndGlyphs" >s [mm]</text><text x="218.7" y="112.0" font-size="4.2" fill="#00ff00" text-anchor="start" font-style="italic" font-weight="bold" textLength="1.8" lengthAdjust="spacingAndGlyphs" >0</text><text x="236.7" y="112.0" font-size="4.2" fill="#00ff00" text-anchor="start" font-style="italic" font-weight="bold" textLength="3.6" lengthAdjust="spacingAndGlyphs" >0°</text><text x="253.7" y="112.0" font-size="4.2" fill="#00ff00" text-anchor="start" font-style="italic" font-weight="bold" textLength="7.2" lengthAdjust="spacingAndGlyphs" >0,83</text><text x="272.7" y="112.0" font-size="4.2" fill="#00ff00" text-anchor="start" font-style="italic" font-weight="bold" textLength="5.4" lengthAdjust="spacingAndGlyphs" >60°</text><text x="201.7" y="118.0" font-size="4.2" fill="#00ff00" text-anchor="start" font-style="italic" font-weight="bold" textLength="12.6" lengthAdjust="spacingAndGlyphs" >v [m/s]</text><text x="218.7" y="118.0" font-size="4.2" fill="#00ff00" text-anchor="start" font-style="italic" font-weight="bold" textLength="10.8" lengthAdjust="spacingAndGlyphs" >-0,143</text><text x="236.7" y="118.0" font-size="4.2" fill="#00ff00" text-anchor="start" font-style="italic" font-weight="bold" textLength="5.4" lengthAdjust="spacingAndGlyphs" >91°</text><text x="253.7" y="118.0" font-size="4.2" fill="#00ff00" text-anchor="start" font-style="italic" font-weight="bold" textLength="9.0" lengthAdjust="spacingAndGlyphs" >0,143</text><text x="272.7" y="118.0" font-size="4.2" fill="#00ff00" text-anchor="start" font-style="italic" font-weight="bold" textLength="7.2" lengthAdjust="spacingAndGlyphs" >330°</text><text x="201.7" y="124.0" font-size="4.2" fill="#00ff00" text-anchor="start" font-style="italic" font-weight="bold" textLength="14.4" lengthAdjust="spacingAndGlyphs" >a [m/s²]</text><text x="218.7" y="124.0" font-size="4.2" fill="#00ff00" text-anchor="start" font-style="italic" font-weight="bold" textLength="10.8" lengthAdjust="spacingAndGlyphs" >-138,4</text><text x="236.7" y="124.0" font-size="4.2" fill="#00ff00" text-anchor="start" font-style="italic" font-weight="bold" textLength="7.2" lengthAdjust="spacingAndGlyphs" >208°</text><text x="253.7" y="124.0" font-size="4.2" fill="#00ff00" text-anchor="start" font-style="italic" font-weight="bold" textLength="9.0" lengthAdjust="spacingAndGlyphs" >65,03</text><text x="272.7" y="124.0" font-size="4.2" fill="#00ff00" text-anchor="start" font-style="italic" font-weight="bold" textLength="7.2" lengthAdjust="spacingAndGlyphs" >111°</text><text x="201.7" y="130.0" font-size="4.2" fill="#00ff00" text-anchor="start" font-style="italic" font-weight="bold" textLength="9.0" lengthAdjust="spacingAndGlyphs" >P [W]</text><text x="218.7" y="130.0" font-size="4.2" fill="#00ff00" text-anchor="start" font-style="italic" font-weight="bold" textLength="12.6" lengthAdjust="spacingAndGlyphs" >-0,0283</text><text x="236.7" y="130.0" font-size="4.2" fill="#00ff00" text-anchor="start" font-style="italic" font-weight="bold" textLength="7.2" lengthAdjust="spacingAndGlyphs" >208°</text><text x="253.7" y="130.0" font-size="4.2" fill="#00ff00" text-anchor="start" font-style="italic" font-weight="bold" textLength="10.8" lengthAdjust="spacingAndGlyphs" >0,0433</text><text x="272.7" y="130.0" font-size="4.2" fill="#00ff00" text-anchor="start" font-style="italic" font-weight="bold" textLength="7.2" lengthAdjust="spacingAndGlyphs" >111°</text><text x="218" y="100.0" font-size="4.2" fill="#00ff00" text-anchor="start" font-style="normal" font-weight="bold" textLength="7.8" lengthAdjust="spacingAndGlyphs" >smin</text><text x="236" y="100.0" font-size="4.2" fill="#00ff00" text-anchor="start" font-style="normal" font-weight="bold" textLength="13.8" lengthAdjust="spacingAndGlyphs" >phi smin</text><text x="253" y="100.0" font-size="4.2" fill="#00ff00" text-anchor="start" font-style="normal" font-weight="bold" textLength="8.1" lengthAdjust="spacingAndGlyphs" >smax</text><text x="272.2" y="100.0" font-size="4.2" fill="#00ff00" text-anchor="start" font-style="normal" font-weight="bold" textLength="13.8" lengthAdjust="spacingAndGlyphs" >phi smax</text><rect x="292.5" y="95.5" width="49.0" height="24.0" stroke="#ffff00" stroke-width="1" fill="none" /><line x1="292.5" y1="101.5" x2="341.5" y2="101.5" stroke="#ffff00" stroke-width="1" /><line x1="292.5" y1="107.5" x2="341.5" y2="107.5" stroke="#ffff00" stroke-width="1" /><line x1="292.5" y1="113.5" x2="341.5" y2="113.5" stroke="#ffff00" stroke-width="1" /><line x1="308.5" y1="101.5" x2="308.5" y2="119.5" stroke="#ffff00" stroke-width="1" /><line x1="324.5" y1="101.5" x2="324.5" y2="119.5" stroke="#ffff00" stroke-width="1" /><text x="293.7" y="106.0" font-size="4.2" fill="#00ff00" text-anchor="start" font-style="italic" font-weight="bold" textLength="1.8" lengthAdjust="spacingAndGlyphs" >d</text><text x="309.3" y="106.0" font-size="4.2" fill="#00ff00" text-anchor="start" font-style="italic" font-weight="bold" textLength="7.7" lengthAdjust="spacingAndGlyphs" >mm</text><text x="329.3" y="106.0" font-size="4.2" fill="#00ff00" text-anchor="start" font-style="italic" font-weight="bold" textLength="8.2" lengthAdjust="spacingAndGlyphs" >2,00</text><text x="293.7" y="112.0" font-size="4.2" fill="#00ff00" text-anchor="start" font-style="italic" font-weight="bold" textLength="1.8" lengthAdjust="spacingAndGlyphs" >l</text><text x="309.3" y="112.0" font-size="4.2" fill="#00ff00" text-anchor="start" font-style="italic" font-weight="bold" textLength="7.7" lengthAdjust="spacingAndGlyphs" >mm</text><text x="329.3" y="112.0" font-size="4.2" fill="#00ff00" text-anchor="start" font-style="italic" font-weight="bold" textLength="8.2" lengthAdjust="spacingAndGlyphs" >8,00</text><text x="293.7" y="118.0" font-size="4.2" fill="#00ff00" text-anchor="start" font-style="italic" font-weight="bold" textLength="1.8" lengthAdjust="spacingAndGlyphs" >m</text><text x="309.3" y="118.0" font-size="4.2" fill="#00ff00" text-anchor="start" font-style="italic" font-weight="bold" textLength="2.5" lengthAdjust="spacingAndGlyphs" >g</text><text x="329.3" y="118.0" font-size="4.2" fill="#00ff00" text-anchor="start" font-style="italic" font-weight="bold" textLength="8.2" lengthAdjust="spacingAndGlyphs" >0,30</text><text x="293.5" y="100.0" font-size="4.2" fill="#00ff00" text-anchor="start" font-style="normal" font-weight="bold" textLength="8" lengthAdjust="spacingAndGlyphs" >cam</text><rect x="345.5" y="95.5" width="48.0" height="24.0" stroke="#ffff00" stroke-width="1" fill="none" /><line x1="345.5" y1="101.5" x2="393.5" y2="101.5" stroke="#ffff00" stroke-width="1" /><line x1="345.5" y1="107.5" x2="393.5" y2="107.5" stroke="#ffff00" stroke-width="1" /><line x1="345.5" y1="113.5" x2="393.5" y2="113.5" stroke="#ffff00" stroke-width="1" /><line x1="361.5" y1="101.5" x2="361.5" y2="119.5" stroke="#ffff00" stroke-width="1" /><line x1="377.5" y1="101.5" x2="377.5" y2="119.5" stroke="#ffff00" stroke-width="1" /><text x="346.7" y="106.0" font-size="4.2" fill="#00ff00" text-anchor="start" font-style="italic" font-weight="bold" textLength="1.8" lengthAdjust="spacingAndGlyphs" >n</text><text x="363.6" y="106.0" font-size="4.2" fill="#00ff00" text-anchor="start" font-style="italic" font-weight="bold" textLength="9" lengthAdjust="spacingAndGlyphs" >1/min</text><text x="378.4" y="106.0" font-size="4.2" fill="#00ff00" text-anchor="start" font-style="italic" font-weight="bold" textLength="6.6" lengthAdjust="spacingAndGlyphs" >1000</text><text x="346.5" y="112.0" font-size="4.2" fill="#00ff00" text-anchor="start" font-style="italic" font-weight="bold" textLength="12.2" lengthAdjust="spacingAndGlyphs" >average</text><text x="363.6" y="112.0" font-size="4.2" fill="#00ff00" text-anchor="start" font-style="italic" font-weight="bold" textLength="5" lengthAdjust="spacingAndGlyphs" >1/s</text><text x="378.4" y="112.0" font-size="4.2" fill="#00ff00" text-anchor="start" font-style="italic" font-weight="bold" textLength="8" lengthAdjust="spacingAndGlyphs" >104,7</text><text x="346.7" y="118.0" font-size="4.2" fill="#00ff00" text-anchor="start" font-style="italic" font-weight="bold" textLength="1.8" lengthAdjust="spacingAndGlyphs" >T</text><text x="363.6" y="118.0" font-size="4.2" fill="#00ff00" text-anchor="start" font-style="italic" font-weight="bold" textLength="2.2" lengthAdjust="spacingAndGlyphs" >s</text><text x="378.4" y="118.0" font-size="4.2" fill="#00ff00" text-anchor="start" font-style="italic" font-weight="bold" textLength="7" lengthAdjust="spacingAndGlyphs" >0,06</text><text x="346.5" y="100.0" font-size="4.2" fill="#00ff00" text-anchor="start" font-style="normal" font-weight="bold" textLength="11" lengthAdjust="spacingAndGlyphs" >Speed</text><line x1="426.5" y1="102.5" x2="576.5" y2="102.5" stroke="#ffff00" stroke-width="1" stroke-dasharray="3,2"/><line x1="426.5" y1="106.5" x2="576.5" y2="106.5" stroke="#ffff00" stroke-width="1" stroke-dasharray="3,2"/><line x1="426.5" y1="111.5" x2="576.5" y2="111.5" stroke="#ffff00" stroke-width="1" stroke-dasharray="3,2"/><line x1="426.5" y1="116.5" x2="576.5" y2="116.5" stroke="#ffff00" stroke-width="1" stroke-dasharray="3,2"/><line x1="426.5" y1="121.5" x2="576.5" y2="121.5" stroke="#ffff00" stroke-width="1" stroke-dasharray="3,2"/><line x1="426.5" y1="126.5" x2="576.5" y2="126.5" stroke="#ffff00" stroke-width="1" stroke-dasharray="3,2"/><line x1="426.5" y1="131.5" x2="576.5" y2="131.5" stroke="#ffff00" stroke-width="1" stroke-dasharray="3,2"/><line x1="426.5" y1="136.5" x2="576.5" y2="136.5" stroke="#ffff00" stroke-width="1" stroke-dasharray="3,2"/><line x1="426.5" y1="141.5" x2="576.5" y2="141.5" stroke="#ffff00" stroke-width="1" stroke-dasharray="3,2"/><line x1="445.5" y1="101.5" x2="445.5" y2="146.5" stroke="#ffff00" stroke-width="1" stroke-dasharray="3,2"/><line x1="464.5" y1="101.5" x2="464.5" y2="146.5" stroke="#ffff00" stroke-width="1" stroke-dasharray="3,2"/><line x1="482.5" y1="101.5" x2="482.5" y2="146.5" stroke="#ffff00" stroke-width="1" stroke-dasharray="3,2"/><line x1="501.5" y1="101.5" x2="501.5" y2="146.5" stroke="#ffff00" stroke-width="1" stroke-dasharray="3,2"/><line x1="520.5" y1="101.5" x2="520.5" y2="146.5" stroke="#ffff00" stroke-width="1" stroke-dasharray="3,2"/><line x1="539.5" y1="101.5" x2="539.5" y2="146.5" stroke="#ffff00" stroke-width="1" stroke-dasharray="3,2"/><line x1="558.5" y1="101.5" x2="558.5" y2="146.5" stroke="#ffff00" stroke-width="1" stroke-dasharray="3,2"/><line x1="426.5" y1="100.0" x2="426.5" y2="146.5" stroke="#ffff00" stroke-width="1" /><line x1="576.5" y1="101.5" x2="576.5" y2="146.5" stroke="#ffff00" stroke-width="1" /><line x1="426.5" y1="146.5" x2="584" y2="146.5" stroke="#ffff00" stroke-width="1" /><path d="M425.0,103.0 L426.5,99.5 L428.0,103.0Z" fill="#ffff00"/><path d="M581,145.0 L585,146.5 L581,148.0Z" fill="#ffff00"/><text x="485" y="96.0" font-size="4" fill="#00ff00" text-anchor="start" font-style="normal" font-weight="bold" textLength="12" lengthAdjust="spacingAndGlyphs" >stroke</text><text x="411" y="97.0" font-size="3.6" fill="#c8b800" text-anchor="start" font-style="normal" font-weight="bold" textLength="13" lengthAdjust="spacingAndGlyphs" >s [mm]</text><text x="411" y="102.0" font-size="3.6" fill="#c8b800" text-anchor="start" font-style="normal" font-weight="bold" textLength="5.699999999999999" lengthAdjust="spacingAndGlyphs" >0,9</text><text x="411" y="106.95" font-size="3.6" fill="#c8b800" text-anchor="start" font-style="normal" font-weight="bold" textLength="5.699999999999999" lengthAdjust="spacingAndGlyphs" >0,8</text><text x="411" y="111.9" font-size="3.6" fill="#c8b800" text-anchor="start" font-style="normal" font-weight="bold" textLength="5.699999999999999" lengthAdjust="spacingAndGlyphs" >0,7</text><text x="411" y="116.85" font-size="3.6" fill="#c8b800" text-anchor="start" font-style="normal" font-weight="bold" textLength="5.699999999999999" lengthAdjust="spacingAndGlyphs" >0,6</text><text x="411" y="121.8" font-size="3.6" fill="#c8b800" text-anchor="start" font-style="normal" font-weight="bold" textLength="5.699999999999999" lengthAdjust="spacingAndGlyphs" >0,5</text><text x="411" y="126.75" font-size="3.6" fill="#c8b800" text-anchor="start" font-style="normal" font-weight="bold" textLength="5.699999999999999" lengthAdjust="spacingAndGlyphs" >0,4</text><text x="411" y="131.7" font-size="3.6" fill="#c8b800" text-anchor="start" font-style="normal" font-weight="bold" textLength="5.699999999999999" lengthAdjust="spacingAndGlyphs" >0,3</text><text x="411" y="136.65" font-size="3.6" fill="#c8b800" text-anchor="start" font-style="normal" font-weight="bold" textLength="5.699999999999999" lengthAdjust="spacingAndGlyphs" >0,2</text><text x="411" y="141.6" font-size="3.6" fill="#c8b800" text-anchor="start" font-style="normal" font-weight="bold" textLength="5.699999999999999" lengthAdjust="spacingAndGlyphs" >0,1</text><text x="411" y="146.55" font-size="3.6" fill="#c8b800" text-anchor="start" font-style="normal" font-weight="bold" textLength="1.9" lengthAdjust="spacingAndGlyphs" >0</text><text x="426.0" y="150.0" font-size="3" fill="#808000" text-anchor="middle" font-style="normal" font-weight="normal" >0</text><text x="444.8" y="150.0" font-size="3" fill="#808000" text-anchor="middle" font-style="normal" font-weight="normal" >45</text><text x="463.6" y="150.0" font-size="3" fill="#808000" text-anchor="middle" font-style="normal" font-weight="normal" >90</text><text x="482.4" y="150.0" font-size="3" fill="#808000" text-anchor="middle" font-style="normal" font-weight="normal" >135</text><text x="501.2" y="150.0" font-size="3" fill="#808000" text-anchor="middle" font-style="normal" font-weight="normal" >180</text><text x="520.0" y="150.0" font-size="3" fill="#808000" text-anchor="middle" font-style="normal" font-weight="normal" >225</text><text x="538.8" y="150.0" font-size="3" fill="#808000" text-anchor="middle" font-style="normal" font-weight="normal" >270</text><text x="557.6" y="150.0" font-size="3" fill="#808000" text-anchor="middle" font-style="normal" font-weight="normal" >315</text><text x="576.4" y="150.0" font-size="3" fill="#808000" text-anchor="middle" font-style="normal" font-weight="normal" >360</text><text x="587" y="148.5" font-size="3.3" fill="#909000" text-anchor="start" font-style="normal" font-weight="normal" textLength="16" lengthAdjust="spacingAndGlyphs" >φ [mm,deg]</text><polyline points="426.0,146.20 426.5,146.20 427.0,146.18 427.5,146.13 428.0,146.04 428.5,145.91 429.0,145.72 429.5,145.48 430.0,145.17 430.5,144.80 431.0,144.36 431.5,143.84 432.0,143.24 432.5,142.57 433.0,141.82 433.5,140.99 434.0,140.09 434.5,139.11 435.0,138.06 435.5,136.93 436.0,135.74 436.5,134.49 437.0,133.19 437.5,131.83 438.0,130.42 438.5,128.98 439.0,127.50 439.5,126.00 440.0,124.48 440.5,122.96 441.0,121.43 441.5,119.91 442.0,118.40 442.5,116.92 443.0,115.46 443.5,114.05 444.0,112.69 444.5,111.38 445.0,110.13 445.5,108.96 446.0,107.86 446.5,106.85 447.0,105.93 447.5,105.10 448.0,104.37 448.5,103.74 449.0,103.23 449.5,102.82 450.0,102.53 450.5,102.36 451.0,102.30 451.5,102.36 452.0,102.53 452.5,102.82 453.0,103.23 453.5,103.74 454.0,104.37 454.5,105.10 455.0,105.93 455.5,106.85 456.0,107.86 456.5,108.96 457.0,110.13 457.5,111.38 458.0,112.69 458.5,114.05 459.0,115.46 459.5,116.92 460.0,118.40 460.5,119.91 461.0,121.43 461.5,122.96 462.0,124.48 462.5,126.00 463.0,127.50 463.5,128.98 464.0,130.42 464.5,131.83 465.0,133.19 465.5,134.49 466.0,135.74 466.5,136.93 467.0,138.06 467.5,139.11 468.0,140.09 468.5,140.99 469.0,141.82 469.5,142.57 470.0,143.24 470.5,143.84 471.0,144.36 471.5,144.80 472.0,145.17 472.5,145.48 473.0,145.72 473.5,145.91 474.0,146.04 474.5,146.13 475.0,146.18 475.5,146.20 476.0,146.20 476.5,146.20 477.0,146.18 477.5,146.13 478.0,146.04 478.5,145.91 479.0,145.72 479.5,145.48 480.0,145.17 480.5,144.80 481.0,144.36 481.5,143.84 482.0,143.24 482.5,142.57 483.0,141.82 483.5,140.99 484.0,140.09 484.5,139.11 485.0,138.06 485.5,136.93 486.0,135.74 486.5,134.49 487.0,133.19 487.5,131.83 488.0,130.42 488.5,128.98 489.0,127.50 489.5,126.00 490.0,124.48 490.5,122.96 491.0,121.43 491.5,119.91 492.0,118.40 492.5,116.92 493.0,115.46 493.5,114.05 494.0,112.69 494.5,111.38 495.0,110.13 495.5,108.96 496.0,107.86 496.5,106.85 497.0,105.93 497.5,105.10 498.0,104.37 498.5,103.74 499.0,103.23 499.5,102.82 500.0,102.53 500.5,102.36 501.0,102.30 501.5,102.36 502.0,102.53 502.5,102.82 503.0,103.23 503.5,103.74 504.0,104.37 504.5,105.10 505.0,105.93 505.5,106.85 506.0,107.86 506.5,108.96 507.0,110.13 507.5,111.38 508.0,112.69 508.5,114.05 509.0,115.46 509.5,116.92 510.0,118.40 510.5,119.91 511.0,121.43 511.5,122.96 512.0,124.48 512.5,126.00 513.0,127.50 513.5,128.98 514.0,130.42 514.5,131.83 515.0,133.19 515.5,134.49 516.0,135.74 516.5,136.93 517.0,138.06 517.5,139.11 518.0,140.09 518.5,140.99 519.0,141.82 519.5,142.57 520.0,143.24 520.5,143.84 521.0,144.36 521.5,144.80 522.0,145.17 522.5,145.48 523.0,145.72 523.5,145.91 524.0,146.04 524.5,146.13 525.0,146.18 525.5,146.20 526.0,146.20 526.5,146.20 527.0,146.18 527.5,146.13 528.0,146.04 528.5,145.91 529.0,145.72 529.5,145.48 530.0,145.17 530.5,144.80 531.0,144.36 531.5,143.84 532.0,143.24 532.5,142.57 533.0,141.82 533.5,140.99 534.0,140.09 534.5,139.11 535.0,138.06 535.5,136.93 536.0,135.74 536.5,134.49 537.0,133.19 537.5,131.83 538.0,130.42 538.5,128.98 539.0,127.50 539.5,126.00 540.0,124.48 540.5,122.96 541.0,121.43 541.5,119.91 542.0,118.40 542.5,116.92 543.0,115.46 543.5,114.05 544.0,112.69 544.5,111.38 545.0,110.13 545.5,108.96 546.0,107.86 546.5,106.85 547.0,105.93 547.5,105.10 548.0,104.37 548.5,103.74 549.0,103.23 549.5,102.82 550.0,102.53 550.5,102.36 551.0,102.30 551.5,102.36 552.0,102.53 552.5,102.82 553.0,103.23 553.5,103.74 554.0,104.37 554.5,105.10 555.0,105.93 555.5,106.85 556.0,107.86 556.5,108.96 557.0,110.13 557.5,111.38 558.0,112.69 558.5,114.05 559.0,115.46 559.5,116.92 560.0,118.40 560.5,119.91 561.0,121.43 561.5,122.96 562.0,124.48 562.5,126.00 563.0,127.50 563.5,128.98 564.0,130.42 564.5,131.83 565.0,133.19 565.5,134.49 566.0,135.74 566.5,136.93 567.0,138.06 567.5,139.11 568.0,140.09 568.5,140.99 569.0,141.82 569.5,142.57 570.0,143.24 570.5,143.84 571.0,144.36 571.5,144.80 572.0,145.17 572.5,145.48 573.0,145.72 573.5,145.91 574.0,146.04 574.5,146.13 575.0,146.18 575.5,146.20 576.0,146.20" fill="none" stroke="#ff0000" stroke-width="3" shape-rendering="auto"/><line x1="426.5" y1="176.5" x2="576.5" y2="176.5" stroke="#ffff00" stroke-width="1" stroke-dasharray="3,2"/><line x1="426.5" y1="184.5" x2="576.5" y2="184.5" stroke="#ffff00" stroke-width="1" stroke-dasharray="3,2"/><line x1="426.5" y1="191.5" x2="576.5" y2="191.5" stroke="#ffff00" stroke-width="1" stroke-dasharray="3,2"/><line x1="426.5" y1="206.5" x2="576.5" y2="206.5" stroke="#ffff00" stroke-width="1" stroke-dasharray="3,2"/><line x1="426.5" y1="213.5" x2="576.5" y2="213.5" stroke="#ffff00" stroke-width="1" stroke-dasharray="3,2"/><line x1="426.5" y1="221.5" x2="576.5" y2="221.5" stroke="#ffff00" stroke-width="1" stroke-dasharray="3,2"/><line x1="445.5" y1="176.5" x2="445.5" y2="221.5" stroke="#ffff00" stroke-width="1" stroke-dasharray="3,2"/><line x1="464.5" y1="176.5" x2="464.5" y2="221.5" stroke="#ffff00" stroke-width="1" stroke-dasharray="3,2"/><line x1="482.5" y1="176.5" x2="482.5" y2="221.5" stroke="#ffff00" stroke-width="1" stroke-dasharray="3,2"/><line x1="501.5" y1="176.5" x2="501.5" y2="221.5" stroke="#ffff00" stroke-width="1" stroke-dasharray="3,2"/><line x1="520.5" y1="176.5" x2="520.5" y2="221.5" stroke="#ffff00" stroke-width="1" stroke-dasharray="3,2"/><line x1="539.5" y1="176.5" x2="539.5" y2="221.5" stroke="#ffff00" stroke-width="1" stroke-dasharray="3,2"/><line x1="558.5" y1="176.5" x2="558.5" y2="221.5" stroke="#ffff00" stroke-width="1" stroke-dasharray="3,2"/><line x1="426.5" y1="175.0" x2="426.5" y2="221.5" stroke="#ffff00" stroke-width="1" /><line x1="576.5" y1="176.5" x2="576.5" y2="221.5" stroke="#ffff00" stroke-width="1" /><line x1="426.5" y1="199.5" x2="584" y2="199.5" stroke="#ffff00" stroke-width="1" /><path d="M425.0,178.0 L426.5,174.5 L428.0,178.0Z" fill="#ffff00"/><path d="M581,198.0 L585,199.5 L581,201.0Z" fill="#ffff00"/><text x="488.4" y="171.0" font-size="4" fill="#00ff00" text-anchor="start" font-style="normal" font-weight="bold" textLength="11" lengthAdjust="spacingAndGlyphs" >speed</text><text x="411" y="172.0" font-size="3.6" fill="#c8b800" text-anchor="start" font-style="normal" font-weight="bold" textLength="13" lengthAdjust="spacingAndGlyphs" >v [m/s]</text><text x="411" y="177.0" font-size="3.6" fill="#c8b800" text-anchor="start" font-style="normal" font-weight="bold" textLength="7.6" lengthAdjust="spacingAndGlyphs" >0,15</text><text x="411" y="185.0" font-size="3.6" fill="#c8b800" text-anchor="start" font-style="normal" font-weight="bold" textLength="5.699999999999999" lengthAdjust="spacingAndGlyphs" >0,1</text><text x="411" y="192.0" font-size="3.6" fill="#c8b800" text-anchor="start" font-style="normal" font-weight="bold" textLength="7.6" lengthAdjust="spacingAndGlyphs" >0,05</text><text x="411" y="200.0" font-size="3.6" fill="#c8b800" text-anchor="start" font-style="normal" font-weight="bold" textLength="1.9" lengthAdjust="spacingAndGlyphs" >0</text><text x="411" y="207.0" font-size="3.6" fill="#c8b800" text-anchor="start" font-style="normal" font-weight="bold" textLength="9.5" lengthAdjust="spacingAndGlyphs" >-0,05</text><text x="411" y="214.0" font-size="3.6" fill="#c8b800" text-anchor="start" font-style="normal" font-weight="bold" textLength="7.6" lengthAdjust="spacingAndGlyphs" >-0,1</text><text x="411" y="222.0" font-size="3.6" fill="#c8b800" text-anchor="start" font-style="normal" font-weight="bold" textLength="9.5" lengthAdjust="spacingAndGlyphs" >-0,15</text><text x="426.0" y="225.0" font-size="3" fill="#808000" text-anchor="middle" font-style="normal" font-weight="normal" >0</text><text x="444.8" y="225.0" font-size="3" fill="#808000" text-anchor="middle" font-style="normal" font-weight="normal" >45</text><text x="463.6" y="225.0" font-size="3" fill="#808000" text-anchor="middle" font-style="normal" font-weight="normal" >90</text><text x="482.4" y="225.0" font-size="3" fill="#808000" text-anchor="middle" font-style="normal" font-weight="normal" >135</text><text x="501.2" y="225.0" font-size="3" fill="#808000" text-anchor="middle" font-style="normal" font-weight="normal" >180</text><text x="520.0" y="225.0" font-size="3" fill="#808000" text-anchor="middle" font-style="normal" font-weight="normal" >225</text><text x="538.8" y="225.0" font-size="3" fill="#808000" text-anchor="middle" font-style="normal" font-weight="normal" >270</text><text x="557.6" y="225.0" font-size="3" fill="#808000" text-anchor="middle" font-style="normal" font-weight="normal" >315</text><text x="576.4" y="225.0" font-size="3" fill="#808000" text-anchor="middle" font-style="normal" font-weight="normal" >360</text><text x="587" y="223.5" font-size="3.3" fill="#909000" text-anchor="start" font-style="normal" font-weight="normal" textLength="16" lengthAdjust="spacingAndGlyphs" >φ [mm,deg]</text><polyline points="426.0,198.82 426.5,198.10 427.0,197.38 427.5,196.65 428.0,195.93 428.5,195.20 429.0,194.48 429.5,193.75 430.0,193.03 430.5,192.31 431.0,191.58 431.5,190.86 432.0,190.13 432.5,189.41 433.0,188.68 433.5,187.96 434.0,187.24 434.5,186.51 435.0,185.79 435.5,185.06 436.0,184.34 436.5,183.62 437.0,182.89 437.5,182.17 438.0,181.44 438.5,180.72 439.0,179.99 439.5,179.27 440.0,178.69 440.5,178.25 441.0,177.95 441.5,177.79 442.0,177.78 442.5,177.91 443.0,178.18 443.5,178.59 444.0,179.14 444.5,179.84 445.0,180.68 445.5,181.66 446.0,182.78 446.5,184.04 447.0,185.45 447.5,186.85 448.0,188.26 448.5,189.66 449.0,191.07 449.5,192.48 450.0,193.88 450.5,195.29 451.0,196.69 451.5,198.10 452.0,199.51 452.5,200.91 453.0,202.32 453.5,203.72 454.0,205.13 454.5,206.54 455.0,207.94 455.5,209.35 456.0,210.75 456.5,212.16 457.0,213.42 457.5,214.54 458.0,215.52 458.5,216.36 459.0,217.06 459.5,217.61 460.0,218.02 460.5,218.29 461.0,218.42 461.5,218.41 462.0,218.25 462.5,217.95 463.0,217.51 463.5,216.93 464.0,216.21 464.5,215.48 465.0,214.76 465.5,214.03 466.0,213.31 466.5,212.58 467.0,211.86 467.5,211.14 468.0,210.41 468.5,209.69 469.0,208.96 469.5,208.24 470.0,207.52 470.5,206.79 471.0,206.07 471.5,205.34 472.0,204.62 472.5,203.89 473.0,203.17 473.5,202.45 474.0,201.72 474.5,201.00 475.0,200.27 475.5,199.55 476.0,198.82 476.5,198.10 477.0,197.38 477.5,196.65 478.0,195.93 478.5,195.20 479.0,194.48 479.5,193.75 480.0,193.03 480.5,192.31 481.0,191.58 481.5,190.86 482.0,190.13 482.5,189.41 483.0,188.68 483.5,187.96 484.0,187.24 484.5,186.51 485.0,185.79 485.5,185.06 486.0,184.34 486.5,183.62 487.0,182.89 487.5,182.17 488.0,181.44 488.5,180.72 489.0,179.99 489.5,179.27 490.0,178.69 490.5,178.25 491.0,177.95 491.5,177.79 492.0,177.78 492.5,177.91 493.0,178.18 493.5,178.59 494.0,179.14 494.5,179.84 495.0,180.68 495.5,181.66 496.0,182.78 496.5,184.04 497.0,185.45 497.5,186.85 498.0,188.26 498.5,189.66 499.0,191.07 499.5,192.48 500.0,193.88 500.5,195.29 501.0,196.69 501.5,198.10 502.0,199.51 502.5,200.91 503.0,202.32 503.5,203.72 504.0,205.13 504.5,206.54 505.0,207.94 505.5,209.35 506.0,210.75 506.5,212.16 507.0,213.42 507.5,214.54 508.0,215.52 508.5,216.35 509.0,217.05 509.5,217.60 510.0,218.00 510.5,218.27 511.0,218.39 511.5,218.37 512.0,218.20 512.5,217.89 513.0,217.44 513.5,216.85 514.0,216.12 514.5,215.38 515.0,214.65 515.5,213.91 516.0,213.18 516.5,212.44 517.0,211.70 517.5,210.97 518.0,210.23 518.5,209.50 519.0,208.76 519.5,208.03 520.0,207.29 520.5,206.56 521.0,205.82 521.5,205.09 522.0,204.35 522.5,203.62 523.0,202.88 523.5,202.14 524.0,201.41 524.5,200.67 525.0,199.94 525.5,199.20 526.0,198.47 526.5,197.73 527.0,197.00 527.5,196.26 528.0,195.53 528.5,194.79 529.0,194.06 529.5,193.32 530.0,192.58 530.5,191.85 531.0,191.11 531.5,190.38 532.0,189.64 532.5,188.91 533.0,188.17 533.5,187.44 534.0,186.70 534.5,185.97 535.0,185.23 535.5,184.50 536.0,183.76 536.5,183.02 537.0,182.29 537.5,181.55 538.0,180.82 538.5,180.08 539.0,179.35 539.5,178.76 540.0,178.31 540.5,178.00 541.0,177.83 541.5,177.81 542.0,177.93 542.5,178.20 543.0,178.60 543.5,179.15 544.0,179.85 544.5,180.68 545.0,181.66 545.5,182.78 546.0,184.04 546.5,185.45 547.0,186.85 547.5,188.26 548.0,189.66 548.5,191.07 549.0,192.48 549.5,193.88 550.0,195.29 550.5,196.69 551.0,198.10 551.5,199.51 552.0,200.91 552.5,202.32 553.0,203.72 553.5,205.13 554.0,206.54 554.5,207.94 555.0,209.35 555.5,210.75 556.0,212.16 556.5,213.42 557.0,214.54 557.5,215.52 558.0,216.36 558.5,217.06 559.0,217.61 559.5,218.02 560.0,218.29 560.5,218.42 561.0,218.41 561.5,218.25 562.0,217.95 562.5,217.51 563.0,216.93 563.5,216.21 564.0,215.48 564.5,214.76 565.0,214.03 565.5,213.31 566.0,212.58 566.5,211.86 567.0,211.14 567.5,210.41 568.0,209.69 568.5,208.96 569.0,208.24 569.5,207.52 570.0,206.79 570.5,206.07 571.0,205.34 571.5,204.62 572.0,203.89 572.5,203.17 573.0,202.45 573.5,201.72 574.0,201.00 574.5,200.27 575.0,199.55 575.5,198.82 576.0,198.10 576.5,197.38" fill="none" stroke="#ff0000" stroke-width="3" shape-rendering="auto"/><line x1="426.5" y1="251.5" x2="576.5" y2="251.5" stroke="#ffff00" stroke-width="1" stroke-dasharray="3,2"/><line x1="426.5" y1="260.5" x2="576.5" y2="260.5" stroke="#ffff00" stroke-width="1" stroke-dasharray="3,2"/><line x1="426.5" y1="278.5" x2="576.5" y2="278.5" stroke="#ffff00" stroke-width="1" stroke-dasharray="3,2"/><line x1="426.5" y1="287.5" x2="576.5" y2="287.5" stroke="#ffff00" stroke-width="1" stroke-dasharray="3,2"/><line x1="426.5" y1="296.5" x2="576.5" y2="296.5" stroke="#ffff00" stroke-width="1" stroke-dasharray="3,2"/><line x1="445.5" y1="251.5" x2="445.5" y2="296.5" stroke="#ffff00" stroke-width="1" stroke-dasharray="3,2"/><line x1="464.5" y1="251.5" x2="464.5" y2="296.5" stroke="#ffff00" stroke-width="1" stroke-dasharray="3,2"/><line x1="482.5" y1="251.5" x2="482.5" y2="296.5" stroke="#ffff00" stroke-width="1" stroke-dasharray="3,2"/><line x1="501.5" y1="251.5" x2="501.5" y2="296.5" stroke="#ffff00" stroke-width="1" stroke-dasharray="3,2"/><line x1="520.5" y1="251.5" x2="520.5" y2="296.5" stroke="#ffff00" stroke-width="1" stroke-dasharray="3,2"/><line x1="539.5" y1="251.5" x2="539.5" y2="296.5" stroke="#ffff00" stroke-width="1" stroke-dasharray="3,2"/><line x1="558.5" y1="251.5" x2="558.5" y2="296.5" stroke="#ffff00" stroke-width="1" stroke-dasharray="3,2"/><line x1="426.5" y1="250.0" x2="426.5" y2="296.5" stroke="#ffff00" stroke-width="1" /><line x1="576.5" y1="251.5" x2="576.5" y2="296.5" stroke="#ffff00" stroke-width="1" /><line x1="426.5" y1="269.5" x2="584" y2="269.5" stroke="#ffff00" stroke-width="1" /><path d="M425.0,253.0 L426.5,249.5 L428.0,253.0Z" fill="#ffff00"/><path d="M581,268.0 L585,269.5 L581,271.0Z" fill="#ffff00"/><text x="468.5" y="246.0" font-size="4" fill="#00ff00" text-anchor="start" font-style="normal" font-weight="bold" textLength="22" lengthAdjust="spacingAndGlyphs" >acceleration</text><text x="411" y="247.0" font-size="3.6" fill="#c8b800" text-anchor="start" font-style="normal" font-weight="bold" textLength="13" lengthAdjust="spacingAndGlyphs" >a [m/s²]</text><text x="411" y="252.0" font-size="3.6" fill="#c8b800" text-anchor="start" font-style="normal" font-weight="bold" textLength="7.6" lengthAdjust="spacingAndGlyphs" >1500</text><text x="411" y="261.0" font-size="3.6" fill="#c8b800" text-anchor="start" font-style="normal" font-weight="bold" textLength="5.699999999999999" lengthAdjust="spacingAndGlyphs" >500</text><text x="411" y="270.0" font-size="3.6" fill="#c8b800" text-anchor="start" font-style="normal" font-weight="bold" textLength="1.9" lengthAdjust="spacingAndGlyphs" >0</text><text x="411" y="279.0" font-size="3.6" fill="#c8b800" text-anchor="start" font-style="normal" font-weight="bold" textLength="7.6" lengthAdjust="spacingAndGlyphs" >-500</text><text x="411" y="288.0" font-size="3.6" fill="#c8b800" text-anchor="start" font-style="normal" font-weight="bold" textLength="9.5" lengthAdjust="spacingAndGlyphs" >-1000</text><text x="411" y="297.0" font-size="3.6" fill="#c8b800" text-anchor="start" font-style="normal" font-weight="bold" textLength="9.5" lengthAdjust="spacingAndGlyphs" >-1500</text><text x="426.0" y="300.0" font-size="3" fill="#808000" text-anchor="middle" font-style="normal" font-weight="normal" >0</text><text x="444.8" y="300.0" font-size="3" fill="#808000" text-anchor="middle" font-style="normal" font-weight="normal" >45</text><text x="463.6" y="300.0" font-size="3" fill="#808000" text-anchor="middle" font-style="normal" font-weight="normal" >90</text><text x="482.4" y="300.0" font-size="3" fill="#808000" text-anchor="middle" font-style="normal" font-weight="normal" >135</text><text x="501.2" y="300.0" font-size="3" fill="#808000" text-anchor="middle" font-style="normal" font-weight="normal" >180</text><text x="520.0" y="300.0" font-size="3" fill="#808000" text-anchor="middle" font-style="normal" font-weight="normal" >225</text><text x="538.8" y="300.0" font-size="3" fill="#808000" text-anchor="middle" font-style="normal" font-weight="normal" >270</text><text x="557.6" y="300.0" font-size="3" fill="#808000" text-anchor="middle" font-style="normal" font-weight="normal" >315</text><text x="576.4" y="300.0" font-size="3" fill="#808000" text-anchor="middle" font-style="normal" font-weight="normal" >360</text><text x="587" y="298.5" font-size="3.3" fill="#909000" text-anchor="start" font-style="normal" font-weight="normal" textLength="16" lengthAdjust="spacingAndGlyphs" >φ [mm,deg]</text><polygon points="426.0,260.42 426.5,260.42 427.0,260.42 427.5,260.71 428.0,260.71 428.5,260.71 429.0,261.28 429.5,261.28 430.0,256.28 430.5,254.93 431.0,254.93 431.5,254.93 432.0,255.47 432.5,260.47 433.0,260.47 433.5,262.09 434.0,262.09 434.5,262.09 435.0,261.74 435.5,261.74 436.0,261.74 436.5,261.31 437.0,261.31 437.5,261.31 438.0,261.30 438.5,261.30 439.0,261.30 439.5,261.05 440.0,261.25 440.5,261.75 441.0,262.58 441.5,263.08 442.0,263.58 442.5,264.27 443.0,264.77 443.5,265.27 444.0,265.01 444.5,266.14 445.0,267.26 445.5,269.63 446.0,270.45 446.5,270.83 447.0,270.88 447.5,271.26 448.0,271.51 448.5,271.56 449.0,271.62 449.5,271.68 450.0,271.04 450.5,271.11 451.0,271.17 451.5,271.34 452.0,271.35 452.5,271.29 453.0,272.18 453.5,272.12 454.0,272.06 454.5,270.36 455.0,270.30 455.5,270.24 456.0,271.87 456.5,271.50 457.0,271.12 457.5,270.00 458.0,269.33 458.5,268.20 459.0,266.82 459.5,265.69 460.0,264.82 460.5,263.97 461.0,263.47 461.5,262.97 462.0,262.99 462.5,262.49 463.0,261.99 463.5,261.70 464.0,261.40 464.5,261.40 465.0,261.78 465.5,261.78 466.0,261.78 466.5,261.38 467.0,261.38 467.5,261.38 468.0,261.79 468.5,261.79 469.0,261.79 469.5,261.89 470.0,261.89 470.5,261.89 471.0,256.47 471.5,256.47 472.0,256.47 472.5,256.73 473.0,256.73 473.5,261.73 474.0,260.53 474.5,260.53 475.0,260.53 475.5,261.78 476.0,261.78 476.5,261.78 477.0,260.09 477.5,260.09 478.0,260.09 478.5,260.80 479.0,260.80 479.5,260.80 480.0,260.55 480.5,255.55 481.0,255.55 481.5,256.82 482.0,256.82 482.5,256.82 483.0,261.25 483.5,261.25 484.0,261.25 484.5,261.48 485.0,261.48 485.5,261.48 486.0,261.84 486.5,261.84 487.0,261.84 487.5,261.01 488.0,261.01 488.5,261.01 489.0,260.58 489.5,260.58 490.0,260.78 490.5,261.92 491.0,262.42 491.5,262.92 492.0,262.53 492.5,263.03 493.0,263.53 493.5,264.94 494.0,265.69 494.5,266.82 495.0,266.69 495.5,267.82 496.0,268.64 496.5,269.62 497.0,269.99 497.5,270.37 498.0,271.90 498.5,271.96 499.0,272.02 499.5,271.13 500.0,271.19 500.5,271.25 501.0,271.72 501.5,271.78 502.0,271.79 502.5,271.54 503.0,271.48 503.5,271.42 504.0,272.19 504.5,272.13 505.0,272.07 505.5,270.89 506.0,270.70 506.5,270.32 507.0,269.52 507.5,269.15 508.0,268.47 508.5,268.98 509.0,267.85 509.5,266.73 510.0,264.91 510.5,264.41 511.0,263.91 511.5,263.11 512.0,262.61 512.5,262.11 513.0,260.74 513.5,260.24 514.0,259.94 514.5,261.29 515.0,261.29 515.5,261.29 516.0,261.28 516.5,261.28 517.0,261.28 517.5,261.39 518.0,261.39 518.5,261.39 519.0,261.46 519.5,261.46 520.0,261.46 520.5,259.95 521.0,254.95 521.5,254.95 522.0,256.39 522.5,256.39 523.0,256.39 523.5,260.45 524.0,260.45 524.5,260.45 525.0,261.20 525.5,261.20 526.0,261.20 526.5,260.70 527.0,260.70 527.5,260.70 528.0,260.71 528.5,260.71 529.0,260.71 529.5,260.56 530.0,260.56 530.5,255.56 531.0,256.60 531.5,256.60 532.0,256.60 532.5,256.15 533.0,261.15 533.5,261.15 534.0,260.58 534.5,260.58 535.0,260.58 535.5,261.67 536.0,261.67 536.5,261.67 537.0,260.31 537.5,260.31 538.0,260.31 538.5,261.44 539.0,261.44 539.5,261.44 540.0,260.81 540.5,261.31 541.0,261.81 541.5,263.43 542.0,263.93 542.5,264.43 543.0,264.98 543.5,265.48 544.0,266.23 544.5,266.22 545.0,267.34 545.5,268.47 546.0,270.50 546.5,270.87 547.0,271.25 547.5,270.17 548.0,270.42 548.5,270.48 549.0,271.22 549.5,271.28 550.0,271.34 550.5,272.01 551.0,272.07 551.5,272.14 552.0,270.78 552.5,270.72 553.0,270.65 553.5,271.96 554.0,271.90 554.5,271.84 555.0,271.77 555.5,271.71 556.0,271.52 556.5,269.66 557.0,269.29 557.5,268.91 558.0,269.70 558.5,268.57 559.0,267.45 559.5,265.34 560.0,264.46 560.5,263.96 561.0,263.62 561.5,263.12 562.0,262.62 562.5,263.23 563.0,262.73 563.5,262.23 564.0,259.91 564.5,259.91 565.0,259.91 565.5,261.84 566.0,261.84 566.5,261.84 567.0,260.86 567.5,260.86 568.0,260.86 568.5,261.94 569.0,261.94 569.5,261.94 570.0,261.54 570.5,261.54 571.0,261.54 571.5,256.36 572.0,256.36 572.5,256.36 573.0,255.54 573.5,255.54 574.0,260.54 574.5,260.40 575.0,260.40 575.5,260.40 576.0,261.20 576.0,267.03 575.5,266.55 575.0,266.55 574.5,266.55 574.0,267.15 573.5,267.15 573.0,267.15 572.5,267.54 572.0,267.54 571.5,267.54 571.0,268.24 570.5,268.24 570.0,268.24 569.5,266.89 569.0,266.89 568.5,266.89 568.0,268.49 567.5,268.49 567.0,268.49 566.5,268.57 566.0,268.57 565.5,269.10 565.0,269.88 564.5,270.75 564.0,271.63 563.5,270.62 563.0,271.24 562.5,271.87 562.0,273.05 561.5,273.68 561.0,274.30 560.5,274.94 560.0,275.57 559.5,276.72 559.0,277.90 558.5,279.40 558.0,280.70 557.5,281.91 557.0,283.08 556.5,285.04 556.0,287.66 555.5,289.46 555.0,290.79 554.5,292.78 554.0,293.43 553.5,293.63 553.0,293.03 552.5,293.23 552.0,293.43 551.5,294.62 551.0,294.42 550.5,294.22 550.0,292.60 549.5,292.40 549.0,291.52 548.5,290.03 548.0,288.70 547.5,286.67 547.0,284.89 546.5,283.19 546.0,282.03 545.5,281.30 545.0,279.93 544.5,278.43 544.0,275.87 543.5,274.90 543.0,274.27 542.5,274.24 542.0,273.61 541.5,272.99 541.0,272.13 540.5,271.51 540.0,270.88 539.5,269.60 539.0,268.72 538.5,267.85 538.0,267.71 537.5,267.36 537.0,267.36 536.5,266.93 536.0,266.93 535.5,266.93 535.0,266.89 534.5,266.89 534.0,266.89 533.5,268.02 533.0,268.02 532.5,268.02 532.0,266.46 531.5,266.46 531.0,266.46 530.5,267.23 530.0,267.23 529.5,267.23 529.0,267.71 528.5,267.71 528.0,267.71 527.5,267.09 527.0,267.09 526.5,267.09 526.0,267.10 525.5,267.10 525.0,267.10 524.5,267.40 524.0,267.40 523.5,267.40 523.0,268.52 522.5,268.52 522.0,268.52 521.5,266.53 521.0,266.53 520.5,266.53 520.0,268.02 519.5,268.02 519.0,268.02 518.5,267.18 518.0,267.18 517.5,267.18 517.0,267.43 516.5,267.43 516.0,267.43 515.5,267.06 515.0,267.93 514.5,268.81 514.0,270.90 513.5,271.63 513.0,272.25 512.5,272.80 512.0,273.43 511.5,274.05 511.0,273.43 510.5,274.05 510.0,274.68 509.5,276.95 509.0,278.45 508.5,279.95 508.0,280.76 507.5,281.93 507.0,283.10 506.5,285.98 506.0,288.48 505.5,290.28 505.0,291.15 504.5,292.48 504.0,293.14 503.5,293.58 503.0,293.78 502.5,293.98 502.0,294.13 501.5,294.09 501.0,293.89 500.5,293.52 500.0,293.32 499.5,293.12 499.0,291.93 498.5,290.60 498.0,289.26 497.5,288.51 497.0,286.01 496.5,284.31 496.0,282.94 495.5,281.78 495.0,280.41 494.5,277.34 494.0,275.84 493.5,274.87 493.0,274.80 492.5,274.17 492.0,273.55 491.5,272.09 491.0,271.47 490.5,270.84 490.0,270.32 489.5,269.54 489.0,268.67 488.5,269.82 488.0,268.95 487.5,268.60 487.0,268.56 486.5,268.56 486.0,268.56 485.5,267.13 485.0,267.13 484.5,267.13 484.0,266.50 483.5,266.50 483.0,266.50 482.5,266.50 482.0,266.50 481.5,266.50 481.0,268.09 480.5,268.09 480.0,268.09 479.5,266.73 479.0,266.73 478.5,266.73 478.0,268.16 477.5,268.16 477.0,268.16 476.5,268.58 476.0,268.58 475.5,268.58 475.0,266.54 474.5,266.54 474.0,266.54 473.5,267.66 473.0,267.66 472.5,267.66 472.0,266.86 471.5,266.86 471.0,266.86 470.5,267.65 470.0,267.65 469.5,267.65 469.0,268.52 468.5,268.52 468.0,268.52 467.5,266.76 467.0,266.76 466.5,266.76 466.0,268.58 465.5,269.11 465.0,269.98 464.5,270.72 464.0,271.59 463.5,272.32 463.0,272.89 462.5,273.51 462.0,274.14 461.5,274.06 461.0,274.69 460.5,275.31 460.0,275.50 459.5,276.65 459.0,278.15 458.5,279.46 458.0,280.76 457.5,281.93 457.0,283.39 456.5,285.36 456.0,287.86 455.5,289.18 455.0,290.51 454.5,291.84 454.0,292.23 453.5,292.43 453.0,292.63 452.5,294.68 452.0,294.88 451.5,294.84 451.0,294.34 450.5,294.14 450.0,293.94 449.5,294.01 449.0,293.13 448.5,291.79 448.0,290.37 447.5,288.33 447.0,285.83 446.5,283.24 446.0,282.07 445.5,280.91 445.0,278.57 444.5,277.07 444.0,275.57 443.5,275.83 443.0,275.20 442.5,274.58 442.0,272.79 441.5,272.17 441.0,271.54 440.5,272.41 440.0,271.78 439.5,271.01 439.0,270.41 438.5,269.53 438.0,268.66 437.5,266.73 437.0,266.73 436.5,266.73 436.0,267.45 435.5,267.45 435.0,267.45 434.5,267.43 434.0,267.43 433.5,267.43 433.0,266.92 432.5,266.92 432.0,266.92 431.5,268.24 431.0,268.24 430.5,268.24 430.0,266.54 429.5,266.54 429.0,266.54 428.5,267.73 428.0,267.73 427.5,267.73 427.0,267.60 426.5,267.60 426.0,267.60" fill="#ff0000" shape-rendering="auto"/><text x="274.4" y="266.2" font-size="6.5" fill="#00ff00" text-anchor="start" font-style="italic" font-weight="bold" textLength="22" lengthAdjust="spacingAndGlyphs" >M&#160;&#160;5:1</text><path d="M220.50,356.00 C220.50,353.30 220.28,350.47 220.70,348.00 C221.12,345.53 222.05,343.28 223.00,341.20 C223.95,339.12 224.90,337.58 226.40,335.50 C227.90,333.42 229.73,331.17 232.00,328.70 C234.27,326.23 237.15,323.07 240.00,320.70 C242.85,318.33 246.07,316.28 249.10,314.50 C252.13,312.72 255.37,311.23 258.20,310.00 C261.03,308.77 263.22,307.98 266.10,307.10 C268.98,306.22 272.52,305.18 275.50,304.70 C278.48,304.22 281.13,304.25 284.00,304.20 C286.87,304.15 289.73,303.92 292.70,304.40 C295.67,304.88 298.95,305.52 301.80,307.10 C304.65,308.68 307.52,311.82 309.80,313.90 C312.08,315.98 313.80,317.33 315.50,319.60 C317.20,321.87 318.78,324.85 320.00,327.50 C321.22,330.15 322.05,332.65 322.80,335.50 C323.55,338.35 324.03,341.35 324.50,344.60 C324.97,347.85 325.50,351.92 325.60,355.00 C325.70,358.08 325.47,360.43 325.10,363.10 C324.73,365.77 324.07,368.17 323.40,371.00 C322.73,373.83 322.05,377.25 321.10,380.10 C320.15,382.95 319.22,385.45 317.70,388.10 C316.18,390.75 314.27,393.45 312.00,396.00 C309.73,398.55 307.32,401.40 304.10,403.40 C300.88,405.40 296.12,407.05 292.70,408.00 C289.28,408.95 286.82,409.20 283.60,409.10 C280.38,409.00 277.25,408.25 273.40,407.40 C269.55,406.55 264.55,405.52 260.50,404.00 C256.45,402.48 252.90,400.57 249.10,398.30 C245.30,396.03 240.92,393.23 237.70,390.40 C234.48,387.57 232.07,384.33 229.80,381.30 C227.53,378.27 225.62,375.05 224.10,372.20 C222.58,369.35 221.30,366.90 220.70,364.20 C220.10,361.50 220.50,358.70 220.50,356.00Z" fill="none" stroke="#ff0000" stroke-width="2.6" shape-rendering="auto"/><path d="M274,356.5 h3 M275.5,355 v3" stroke="#ff0000" stroke-width="1"/><rect x="331.2" y="340.2" width="55.7" height="2.3" fill="#ff0000" shape-rendering="auto"/><rect x="331.2" y="370.1" width="55.7" height="2.3" fill="#ff0000" shape-rendering="auto"/><rect x="331.2" y="340.2" width="2.5" height="9.8" fill="#ff0000" shape-rendering="auto"/><rect x="331.2" y="363" width="2.5" height="9.4" fill="#ff0000" shape-rendering="auto"/><rect x="383.8" y="340.2" width="3.1" height="32.2" fill="#ff0000" shape-rendering="auto"/><rect x="331" y="348" width="55.9" height="2.6" fill="#ff0000" shape-rendering="auto"/><rect x="331" y="362.6" width="55.9" height="2.5" fill="#ff0000" shape-rendering="auto"/><path d="M332,349.3 C327.5,349.6 325.3,352.8 325.3,356.6 C325.3,360.4 327.5,363.4 332,363.9" fill="none" stroke="#ff0000" stroke-width="2.5" shape-rendering="auto"/><path d="M333.5,347.5 L338.5,343 M344.3,347.5 L349.3,343 M354.9,347.5 L359.9,343 M365.5,347.5 L370.5,343 M376.1,347.5 L381.1,343 M334.2,370 L338.7,365.5 M344.8,370 L349.3,365.5 M355.4,370 L359.9,365.5 M366.0,370 L370.5,365.5 M376.5,370 L381,365.5" stroke="#ffff00" stroke-width="0.9" shape-rendering="auto"/><rect x="41.5" y="281.5" width="151" height="12" stroke="#ffff00" stroke-width="1" fill="none" /><line x1="41.5" y1="287.5" x2="192.5" y2="287.5" stroke="#ffff00" stroke-width="1" /><text x="43" y="286" font-size="3.8" fill="#00ff00" text-anchor="start" font-style="normal" font-weight="bold" textLength="49" lengthAdjust="spacingAndGlyphs" >cam curve: 2D coordinates</text><text x="43" y="292.3" font-size="3.8" fill="#00ff00" text-anchor="start" font-style="normal" font-weight="bold" textLength="53" lengthAdjust="spacingAndGlyphs" >interpolate intermediate values</text><rect x="40.5" y="398.5" width="120.0" height="102.0" stroke="#ffff00" stroke-width="1" fill="none" /><line x1="40.5" y1="404.5" x2="160.5" y2="404.5" stroke="#ffff00" stroke-width="1" /><line x1="40.5" y1="410.5" x2="160.5" y2="410.5" stroke="#ffff00" stroke-width="1" /><line x1="40.5" y1="416.5" x2="160.5" y2="416.5" stroke="#ffff00" stroke-width="1" /><line x1="40.5" y1="422.5" x2="160.5" y2="422.5" stroke="#ffff00" stroke-width="1" /><line x1="40.5" y1="428.5" x2="160.5" y2="428.5" stroke="#ffff00" stroke-width="1" /><line x1="40.5" y1="434.5" x2="160.5" y2="434.5" stroke="#ffff00" stroke-width="1" /><line x1="40.5" y1="440.5" x2="160.5" y2="440.5" stroke="#ffff00" stroke-width="1" /><line x1="40.5" y1="446.5" x2="160.5" y2="446.5" stroke="#ffff00" stroke-width="1" /><line x1="40.5" y1="452.5" x2="160.5" y2="452.5" stroke="#ffff00" stroke-width="1" /><line x1="40.5" y1="458.5" x2="160.5" y2="458.5" stroke="#ffff00" stroke-width="1" /><line x1="40.5" y1="464.5" x2="160.5" y2="464.5" stroke="#ffff00" stroke-width="1" /><line x1="40.5" y1="470.5" x2="160.5" y2="470.5" stroke="#ffff00" stroke-width="1" /><line x1="40.5" y1="476.5" x2="160.5" y2="476.5" stroke="#ffff00" stroke-width="1" /><line x1="40.5" y1="482.5" x2="160.5" y2="482.5" stroke="#ffff00" stroke-width="1" /><line x1="40.5" y1="488.5" x2="160.5" y2="488.5" stroke="#ffff00" stroke-width="1" /><line x1="40.5" y1="494.5" x2="160.5" y2="494.5" stroke="#ffff00" stroke-width="1" /><line x1="109.5" y1="404.5" x2="109.5" y2="500.5" stroke="#ffff00" stroke-width="1" /><line x1="119.5" y1="404.5" x2="119.5" y2="500.5" stroke="#ffff00" stroke-width="1" /><line x1="133.5" y1="404.5" x2="133.5" y2="500.5" stroke="#ffff00" stroke-width="1" /><text x="42" y="403" font-size="3.9" fill="#00ff00" text-anchor="start" font-style="normal" font-weight="bold" textLength="19" lengthAdjust="spacingAndGlyphs" >cam curve</text><text x="42" y="409.0" font-size="3.9" fill="#00ff00" text-anchor="start" font-style="italic" font-weight="bold" textLength="35.6" lengthAdjust="spacingAndGlyphs" >Cross sectional area</text><text x="110.8" y="409.0" font-size="3.9" fill="#00ff00" text-anchor="start" font-style="italic" font-weight="bold" textLength="1.9" lengthAdjust="spacingAndGlyphs" >A</text><text x="120.3" y="409.0" font-size="3.9" fill="#00ff00" text-anchor="start" font-style="italic" font-weight="bold" textLength="9" lengthAdjust="spacingAndGlyphs" >mm²</text><text x="134.5" y="409.0" font-size="3.9" fill="#00ff00" text-anchor="start" font-style="italic" font-weight="bold" textLength="9.5" lengthAdjust="spacingAndGlyphs" >121,2</text><text x="42" y="415.0" font-size="3.9" fill="#00ff00" text-anchor="start" font-style="italic" font-weight="bold" textLength="51.62" lengthAdjust="spacingAndGlyphs" >Area moment of inertia 1 grad</text><text x="110.8" y="415.0" font-size="3.9" fill="#00ff00" text-anchor="start" font-style="italic" font-weight="bold" textLength="3.8" lengthAdjust="spacingAndGlyphs" >Hy</text><text x="120.3" y="415.0" font-size="3.9" fill="#00ff00" text-anchor="start" font-style="italic" font-weight="bold" textLength="9" lengthAdjust="spacingAndGlyphs" >mm³</text><text x="134.5" y="415.0" font-size="3.9" fill="#00ff00" text-anchor="start" font-style="italic" font-weight="bold" textLength="17.099999999999998" lengthAdjust="spacingAndGlyphs" >-6,866E-4</text><text x="42" y="421.0" font-size="3.9" fill="#00ff00" text-anchor="start" font-style="italic" font-weight="bold" textLength="51.62" lengthAdjust="spacingAndGlyphs" >Area moment of inertia 1 grad</text><text x="110.8" y="421.0" font-size="3.9" fill="#00ff00" text-anchor="start" font-style="italic" font-weight="bold" textLength="3.8" lengthAdjust="spacingAndGlyphs" >Hx</text><text x="120.3" y="421.0" font-size="3.9" fill="#00ff00" text-anchor="start" font-style="italic" font-weight="bold" textLength="9" lengthAdjust="spacingAndGlyphs" >mm³</text><text x="134.5" y="421.0" font-size="3.9" fill="#00ff00" text-anchor="start" font-style="italic" font-weight="bold" textLength="15.2" lengthAdjust="spacingAndGlyphs" >0,000236</text><text x="42" y="427.0" font-size="3.9" fill="#00ff00" text-anchor="start" font-style="italic" font-weight="bold" textLength="56.96" lengthAdjust="spacingAndGlyphs" >Ax.Area moment of inertia 2 grad</text><text x="110.8" y="427.0" font-size="3.9" fill="#00ff00" text-anchor="start" font-style="italic" font-weight="bold" textLength="3.8" lengthAdjust="spacingAndGlyphs" >Iy</text><text x="120.3" y="427.0" font-size="3.9" fill="#00ff00" text-anchor="start" font-style="italic" font-weight="bold" textLength="9" lengthAdjust="spacingAndGlyphs" >mm4</text><text x="134.5" y="427.0" font-size="3.9" fill="#00ff00" text-anchor="start" font-style="italic" font-weight="bold" textLength="7.6" lengthAdjust="spacingAndGlyphs" >1611</text><text x="42" y="433.0" font-size="3.9" fill="#00ff00" text-anchor="start" font-style="italic" font-weight="bold" textLength="56.96" lengthAdjust="spacingAndGlyphs" >Ax.Area moment of inertia 2 grad</text><text x="110.8" y="433.0" font-size="3.9" fill="#00ff00" text-anchor="start" font-style="italic" font-weight="bold" textLength="3.8" lengthAdjust="spacingAndGlyphs" >Ix</text><text x="120.3" y="433.0" font-size="3.9" fill="#00ff00" text-anchor="start" font-style="italic" font-weight="bold" textLength="9" lengthAdjust="spacingAndGlyphs" >mm4</text><text x="134.5" y="433.0" font-size="3.9" fill="#00ff00" text-anchor="start" font-style="italic" font-weight="bold" textLength="7.6" lengthAdjust="spacingAndGlyphs" >1611</text><text x="42" y="439.0" font-size="3.9" fill="#00ff00" text-anchor="start" font-style="italic" font-weight="bold" textLength="58.74" lengthAdjust="spacingAndGlyphs" >Dia.Area moment of inertia 2 grad</text><text x="110.8" y="439.0" font-size="3.9" fill="#00ff00" text-anchor="start" font-style="italic" font-weight="bold" textLength="5.699999999999999" lengthAdjust="spacingAndGlyphs" >Ixy</text><text x="120.3" y="439.0" font-size="3.9" fill="#00ff00" text-anchor="start" font-style="italic" font-weight="bold" textLength="9" lengthAdjust="spacingAndGlyphs" >mm4</text><text x="134.5" y="439.0" font-size="3.9" fill="#00ff00" text-anchor="start" font-style="italic" font-weight="bold" textLength="17.099999999999998" lengthAdjust="spacingAndGlyphs" >-0,000072</text><text x="42" y="445.0" font-size="3.9" fill="#00ff00" text-anchor="start" font-style="italic" font-weight="bold" textLength="58.74" lengthAdjust="spacingAndGlyphs" >Pol.Area moment of inertia 2 grad</text><text x="110.8" y="445.0" font-size="3.9" fill="#00ff00" text-anchor="start" font-style="italic" font-weight="bold" textLength="5.699999999999999" lengthAdjust="spacingAndGlyphs" >Ip0</text><text x="120.3" y="445.0" font-size="3.9" fill="#00ff00" text-anchor="start" font-style="italic" font-weight="bold" textLength="9" lengthAdjust="spacingAndGlyphs" >mm4</text><text x="134.5" y="445.0" font-size="3.9" fill="#00ff00" text-anchor="start" font-style="italic" font-weight="bold" textLength="7.6" lengthAdjust="spacingAndGlyphs" >3031</text><text x="42" y="451.0" font-size="3.9" fill="#00ff00" text-anchor="start" font-style="italic" font-weight="bold" textLength="40.94" lengthAdjust="spacingAndGlyphs" >Co.of gravi.coordinates</text><text x="110.8" y="451.0" font-size="3.9" fill="#00ff00" text-anchor="start" font-style="italic" font-weight="bold" textLength="3.8" lengthAdjust="spacingAndGlyphs" >ys</text><text x="120.3" y="451.0" font-size="3.9" fill="#00ff00" text-anchor="start" font-style="italic" font-weight="bold" textLength="9" lengthAdjust="spacingAndGlyphs" >mm</text><text x="134.5" y="451.0" font-size="3.9" fill="#00ff00" text-anchor="start" font-style="italic" font-weight="bold" textLength="1.9" lengthAdjust="spacingAndGlyphs" >0</text><text x="42" y="457.0" font-size="3.9" fill="#00ff00" text-anchor="start" font-style="italic" font-weight="bold" textLength="40.94" lengthAdjust="spacingAndGlyphs" >Co.of gravi.coordinates</text><text x="110.8" y="457.0" font-size="3.9" fill="#00ff00" text-anchor="start" font-style="italic" font-weight="bold" textLength="3.8" lengthAdjust="spacingAndGlyphs" >xs</text><text x="120.3" y="457.0" font-size="3.9" fill="#00ff00" text-anchor="start" font-style="italic" font-weight="bold" textLength="9" lengthAdjust="spacingAndGlyphs" >mm</text><text x="134.5" y="457.0" font-size="3.9" fill="#00ff00" text-anchor="start" font-style="italic" font-weight="bold" textLength="1.9" lengthAdjust="spacingAndGlyphs" >0</text><text x="42" y="463.0" font-size="3.9" fill="#00ff00" text-anchor="start" font-style="italic" font-weight="bold" textLength="60.52" lengthAdjust="spacingAndGlyphs" >Ax.Area moment of inertia str.grs.</text><text x="110.8" y="463.0" font-size="3.9" fill="#00ff00" text-anchor="start" font-style="italic" font-weight="bold" textLength="5.699999999999999" lengthAdjust="spacingAndGlyphs" >Iys</text><text x="120.3" y="463.0" font-size="3.9" fill="#00ff00" text-anchor="start" font-style="italic" font-weight="bold" textLength="9" lengthAdjust="spacingAndGlyphs" >mm4</text><text x="134.5" y="463.0" font-size="3.9" fill="#00ff00" text-anchor="start" font-style="italic" font-weight="bold" textLength="7.6" lengthAdjust="spacingAndGlyphs" >1611</text><text x="42" y="469.0" font-size="3.9" fill="#00ff00" text-anchor="start" font-style="italic" font-weight="bold" textLength="60.52" lengthAdjust="spacingAndGlyphs" >Ax.Area moment of inertia str.grs.</text><text x="110.8" y="469.0" font-size="3.9" fill="#00ff00" text-anchor="start" font-style="italic" font-weight="bold" textLength="5.699999999999999" lengthAdjust="spacingAndGlyphs" >Ixs</text><text x="120.3" y="469.0" font-size="3.9" fill="#00ff00" text-anchor="start" font-style="italic" font-weight="bold" textLength="9" lengthAdjust="spacingAndGlyphs" >mm4</text><text x="134.5" y="469.0" font-size="3.9" fill="#00ff00" text-anchor="start" font-style="italic" font-weight="bold" textLength="7.6" lengthAdjust="spacingAndGlyphs" >1611</text><text x="42" y="475.0" font-size="3.9" fill="#00ff00" text-anchor="start" font-style="italic" font-weight="bold" textLength="62.300000000000004" lengthAdjust="spacingAndGlyphs" >Dia.Area moment of inertia str.grs.</text><text x="110.8" y="475.0" font-size="3.9" fill="#00ff00" text-anchor="start" font-style="italic" font-weight="bold" textLength="5.699999999999999" lengthAdjust="spacingAndGlyphs" >Ixy</text><text x="120.3" y="475.0" font-size="3.9" fill="#00ff00" text-anchor="start" font-style="italic" font-weight="bold" textLength="9" lengthAdjust="spacingAndGlyphs" >mm4</text><text x="134.5" y="475.0" font-size="3.9" fill="#00ff00" text-anchor="start" font-style="italic" font-weight="bold" textLength="15.2" lengthAdjust="spacingAndGlyphs" >0,000072</text><text x="42" y="481.0" font-size="3.9" fill="#00ff00" text-anchor="start" font-style="italic" font-weight="bold" textLength="62.300000000000004" lengthAdjust="spacingAndGlyphs" >Pol.Area moment of inertia str.grs.</text><text x="110.8" y="481.0" font-size="3.9" fill="#00ff00" text-anchor="start" font-style="italic" font-weight="bold" textLength="5.699999999999999" lengthAdjust="spacingAndGlyphs" >Ip0</text><text x="120.3" y="481.0" font-size="3.9" fill="#00ff00" text-anchor="start" font-style="italic" font-weight="bold" textLength="9" lengthAdjust="spacingAndGlyphs" >mm4</text><text x="134.5" y="481.0" font-size="3.9" fill="#00ff00" text-anchor="start" font-style="italic" font-weight="bold" textLength="7.6" lengthAdjust="spacingAndGlyphs" >3031</text><text x="42" y="487.0" font-size="3.9" fill="#00ff00" text-anchor="start" font-style="italic" font-weight="bold" textLength="51.62" lengthAdjust="spacingAndGlyphs" >Extr.area moment of inertia 1</text><text x="110.8" y="487.0" font-size="3.9" fill="#00ff00" text-anchor="start" font-style="italic" font-weight="bold" textLength="3.8" lengthAdjust="spacingAndGlyphs" >I1</text><text x="120.3" y="487.0" font-size="3.9" fill="#00ff00" text-anchor="start" font-style="italic" font-weight="bold" textLength="9" lengthAdjust="spacingAndGlyphs" >mm4</text><text x="134.5" y="487.0" font-size="3.9" fill="#00ff00" text-anchor="start" font-style="italic" font-weight="bold" textLength="7.6" lengthAdjust="spacingAndGlyphs" >1611</text><text x="42" y="493.0" font-size="3.9" fill="#00ff00" text-anchor="start" font-style="italic" font-weight="bold" textLength="51.62" lengthAdjust="spacingAndGlyphs" >Extr.area moment of inertia 2</text><text x="110.8" y="493.0" font-size="3.9" fill="#00ff00" text-anchor="start" font-style="italic" font-weight="bold" textLength="3.8" lengthAdjust="spacingAndGlyphs" >I2</text><text x="120.3" y="493.0" font-size="3.9" fill="#00ff00" text-anchor="start" font-style="italic" font-weight="bold" textLength="9" lengthAdjust="spacingAndGlyphs" >mm4</text><text x="134.5" y="493.0" font-size="3.9" fill="#00ff00" text-anchor="start" font-style="italic" font-weight="bold" textLength="7.6" lengthAdjust="spacingAndGlyphs" >1611</text><text x="42" y="499.0" font-size="3.9" fill="#00ff00" text-anchor="start" font-style="italic" font-weight="bold" textLength="17.8" lengthAdjust="spacingAndGlyphs" >Extr.angle</text><text x="110.8" y="499.0" font-size="3.9" fill="#00ff00" text-anchor="start" font-style="italic" font-weight="bold" textLength="5.699999999999999" lengthAdjust="spacingAndGlyphs" >phi</text><text x="120.3" y="499.0" font-size="3.9" fill="#00ff00" text-anchor="start" font-style="italic" font-weight="bold" textLength="9" lengthAdjust="spacingAndGlyphs" >°</text><text x="134.5" y="499.0" font-size="3.9" fill="#00ff00" text-anchor="start" font-style="italic" font-weight="bold" textLength="9.5" lengthAdjust="spacingAndGlyphs" >1,160</text><rect x="350" y="451" width="3" height="56" fill="#ff0000"/><rect x="350.5" y="451" width="271" height="3" fill="#ff0000"/><line x1="352" y1="466.5" x2="620" y2="466.5" stroke="#ffff00" stroke-width="1" /><line x1="397.5" y1="453" x2="397.5" y2="466" stroke="#ffff00" stroke-width="1" /><line x1="462.5" y1="453" x2="462.5" y2="506" stroke="#ffff00" stroke-width="1" /><line x1="525.5" y1="453" x2="525.5" y2="466" stroke="#ffff00" stroke-width="1" /><line x1="588.5" y1="453" x2="588.5" y2="466" stroke="#ffff00" stroke-width="1" /><line x1="462" y1="479.5" x2="620" y2="479.5" stroke="#ffff00" stroke-width="1" /><line x1="543.5" y1="466.5" x2="543.5" y2="506" stroke="#ffff00" stroke-width="1" /><line x1="543.5" y1="493.5" x2="620" y2="493.5" stroke="#ffff00" stroke-width="1" /><line x1="555.5" y1="493.5" x2="555.5" y2="506" stroke="#ffff00" stroke-width="1" /><line x1="591.5" y1="493.5" x2="591.5" y2="506" stroke="#ffff00" stroke-width="1" /><line x1="606.5" y1="493.5" x2="606.5" y2="506" stroke="#ffff00" stroke-width="1" /><text x="352.3" y="456" font-size="3.7" fill="#f0f000" text-anchor="start" font-style="italic" font-weight="normal" textLength="29.3" lengthAdjust="spacingAndGlyphs" >Responsible dept.</text><text x="399.4" y="456" font-size="3.7" fill="#f0f000" text-anchor="start" font-style="italic" font-weight="normal" textLength="34" lengthAdjust="spacingAndGlyphs" >Technical reference</text><text x="463.3" y="455.8" font-size="3.7" fill="#f0f000" text-anchor="start" font-style="italic" font-weight="normal" textLength="18.5" lengthAdjust="spacingAndGlyphs" >Created by</text><text x="526.5" y="455.8" font-size="3.7" fill="#f0f000" text-anchor="start" font-style="italic" font-weight="normal" textLength="21.8" lengthAdjust="spacingAndGlyphs" >Approved by</text><text x="463.3" y="469.6" font-size="3.7" fill="#f0f000" text-anchor="start" font-style="italic" font-weight="normal" textLength="26" lengthAdjust="spacingAndGlyphs" >Document type</text><text x="544.6" y="469.6" font-size="3.7" fill="#f0f000" text-anchor="start" font-style="italic" font-weight="normal" textLength="28.8" lengthAdjust="spacingAndGlyphs" >Document status</text><text x="463.3" y="482.7" font-size="3.7" fill="#f0f000" text-anchor="start" font-style="italic" font-weight="normal" textLength="43.6" lengthAdjust="spacingAndGlyphs" >Title, Supplementary title</text><text x="465.5" y="493.2" font-size="7.5" fill="#ff0000" text-anchor="start" font-style="italic" font-weight="bold" textLength="16" lengthAdjust="spacingAndGlyphs" >P3G</text><text x="353" y="502.3" font-size="6" fill="#00ff00" text-anchor="start" font-style="italic" font-weight="bold" textLength="82" lengthAdjust="spacingAndGlyphs" >Korea Polytechnic University</text><text x="544.2" y="496.8" font-size="3.7" fill="#f0f000" text-anchor="start" font-style="italic" font-weight="normal" textLength="7.7" lengthAdjust="spacingAndGlyphs" >Rev.</text><text x="556.1" y="496.8" font-size="3.7" fill="#f0f000" text-anchor="start" font-style="italic" font-weight="normal" textLength="22.5" lengthAdjust="spacingAndGlyphs" >Date of issue</text><text x="592.6" y="496.8" font-size="3.7" fill="#f0f000" text-anchor="start" font-style="italic" font-weight="normal" textLength="8.4" lengthAdjust="spacingAndGlyphs" >Lang.</text><text x="607.3" y="496.8" font-size="3.7" fill="#f0f000" text-anchor="start" font-style="italic" font-weight="normal" textLength="9.8" lengthAdjust="spacingAndGlyphs" >Page</text><text x="546.3" y="504" font-size="5.8" fill="#00ff00" text-anchor="start" font-style="italic" font-weight="500" textLength="3.5" lengthAdjust="spacingAndGlyphs" >A</text><text x="558.2" y="504" font-size="5.8" fill="#00ff00" text-anchor="start" font-style="normal" font-weight="500" textLength="28" lengthAdjust="spacingAndGlyphs" >2020-08-29</text><text x="594" y="504" font-size="5.8" fill="#00ff00" text-anchor="start" font-style="normal" font-weight="500" textLength="6.3" lengthAdjust="spacingAndGlyphs" >en</text><text x="35" y="519.3" font-size="4.3" fill="#e8e000" text-anchor="start" font-style="italic" font-weight="bold" textLength="61.7" lengthAdjust="spacingAndGlyphs" >C:\HEXA\GEO4\P3G\DRAW\p3g.go4</text><text x="598.2" y="519.7" font-size="4.2" fill="#f0f000" text-anchor="start" font-style="normal" font-weight="normal" textLength="28" lengthAdjust="spacingAndGlyphs" >2020-08-20 18:00</text><text x="2" y="528.5" font-size="4.6" fill="#a0b0d0" text-anchor="start" font-style="normal" font-weight="bold" textLength="208" lengthAdjust="spacingAndGlyphs" >2020.08.29 13:45 &#160;ABT-LOOK CROUST 1-0000 ... Korea Polytechnic University ... C:\HEXA\GEO4\P3G.go4</text><text transform="translate(11.2,505) rotate(-90)" x="0" y="0" font-size="4.1" font-weight="bold" fill="#f8f800" textLength="119" lengthAdjust="spacingAndGlyphs">Copying or transmission of this document as well as utilization and communication of its contents</text><text transform="translate(15.5,505) rotate(-90)" x="0" y="0" font-size="4.1" font-weight="bold" fill="#f8f800" textLength="120" lengthAdjust="spacingAndGlyphs">are not permitted unless expressly granted. Offenders will be held liable for the payment of damages.</text><text transform="translate(19.6,505) rotate(-90)" x="0" y="0" font-size="4.1" font-weight="bold" fill="#f8f800" textLength="110" lengthAdjust="spacingAndGlyphs">All rights reserved in the event of the grant of a patent, utility model or design. Protected by DIN</text><text transform="translate(23.700000000000003,505) rotate(-90)" x="0" y="0" font-size="4.1" font-weight="bold" fill="#f8f800" textLength="113" lengthAdjust="spacingAndGlyphs">ISO 16016 / Schutzvermerk nach ISO 16016 beachten. Weitergabe sowie Vervielfaeltigung dieses</text><text transform="translate(28.200000000000003,505) rotate(-90)" x="0" y="0" font-size="4.1" font-weight="bold" fill="#f8f800" textLength="110" lengthAdjust="spacingAndGlyphs">Dokuments, Verwertung und Mitteilung seines Inhaltes sind verboten, soweit nicht ausdruecklich gestattet</text>
</svg>
</body></html>
